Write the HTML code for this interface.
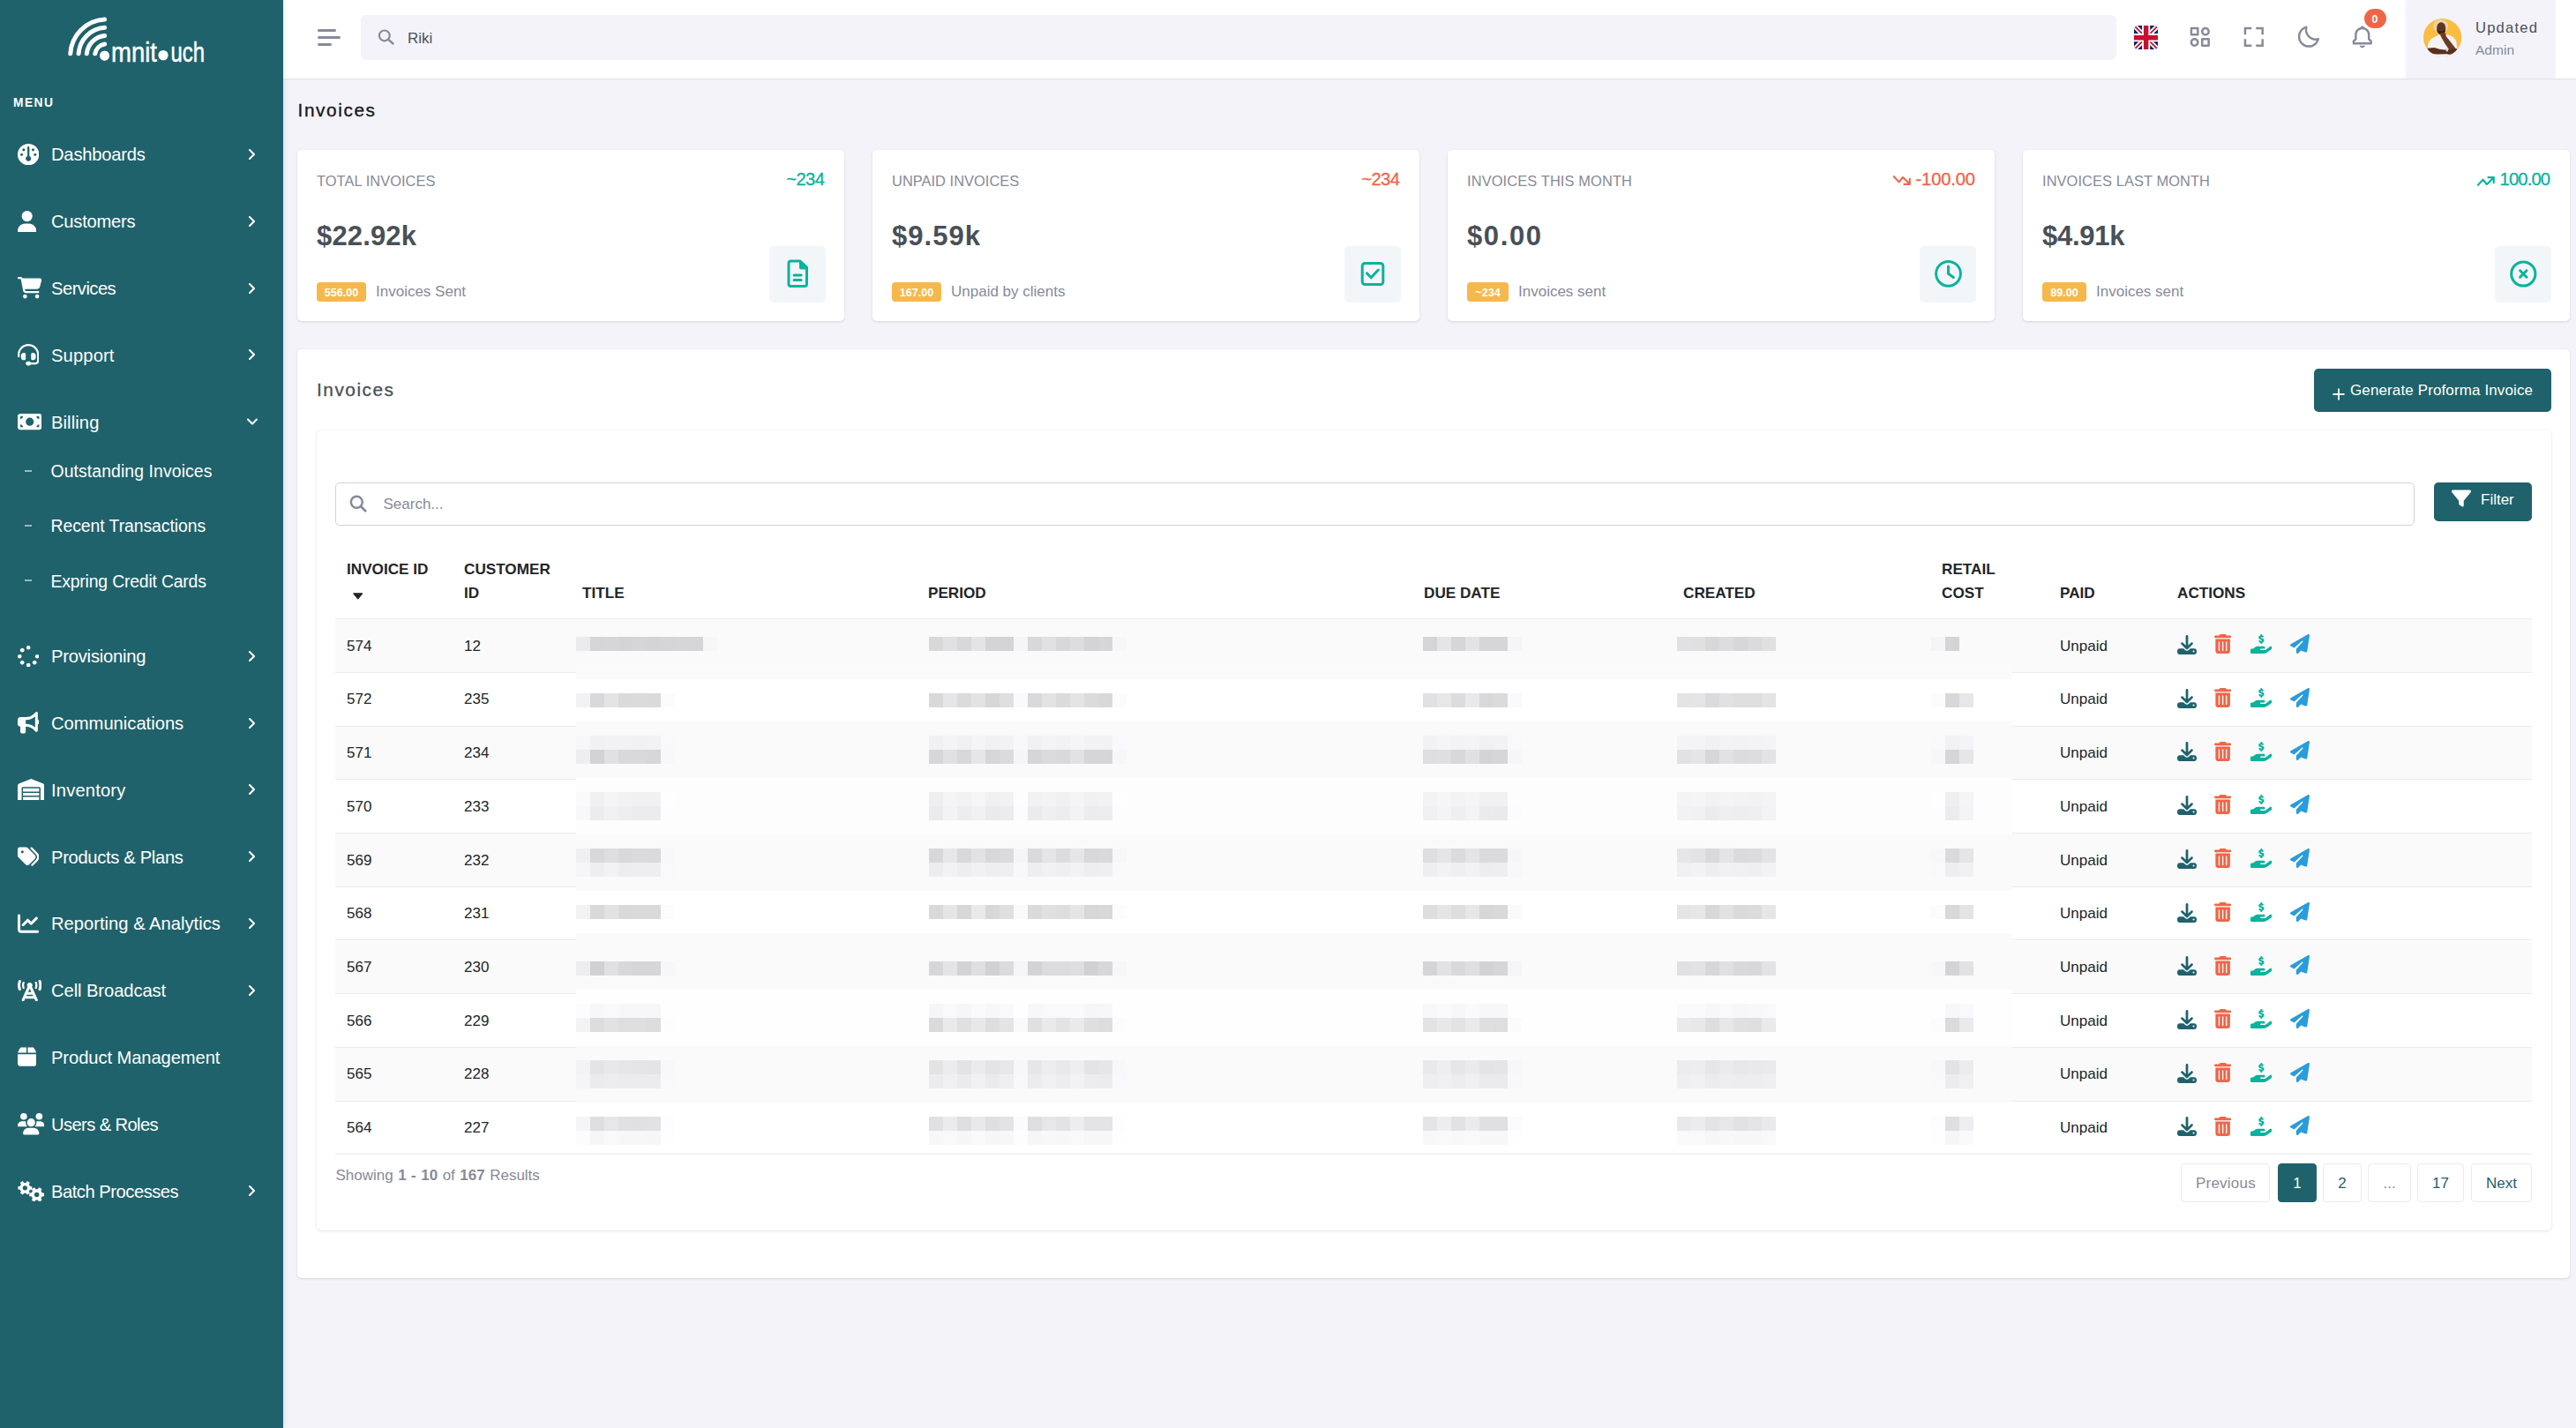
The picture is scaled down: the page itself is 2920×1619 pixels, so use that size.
<!DOCTYPE html><html lang="en"><head><meta charset="utf-8"><title>Invoices</title><style>
*{box-sizing:border-box;margin:0;padding:0}
html,body{width:2920px;height:1619px;overflow:hidden}
body{background:#f3f3f9;font-family:"Liberation Sans",sans-serif;color:#212529;position:relative}
.abs{position:absolute}
#side{position:absolute;left:0;top:0;width:321px;height:1619px;background:#1f626b;z-index:5;box-shadow:1px 0 5px rgba(15,34,58,.10)}
#top{position:absolute;left:321px;top:0;width:2599px;height:90px;background:#fff;border-bottom:1px solid #e3e4ea;box-shadow:0 1px 1px rgba(56,65,74,.025)}
.t{position:absolute;white-space:nowrap;line-height:1}
.card{position:absolute;background:#fff;border-radius:5px;box-shadow:0 1px 3px rgba(56,65,74,.16)}
.bdg{position:absolute;background:#f7b84b;color:#fff;font-weight:700;font-size:12.6px;border-radius:4px;height:22px;line-height:24px;text-align:center}
.ibox{position:absolute;width:64px;height:64px;border-radius:5px;background:#f3f6f9}
.btn{position:absolute;background:#1f626b;border-radius:5px;color:#fff}
.row{position:absolute;left:380px;width:2490px;border-bottom:1px solid #e9ebec}
.pg{position:absolute;top:1319px;height:44px;border:1px solid #e9ebec;border-radius:4px;background:#fff}
</style></head><body>
<div id="side">
<svg class="abs" style="left:60px;top:10px" width="190" height="75" viewBox="60 10 190 75">
<g fill="none" stroke="#fff" stroke-width="5" stroke-linecap="round">
<path d="M79.76 60.80A41.2 41.2 0 0 1 118.60 21.96"/>
<path d="M89.08 60.80A31.9 31.9 0 0 1 118.60 31.28"/>
<path d="M98.32 60.80A22.7 22.7 0 0 1 118.60 40.52"/>
<path d="M107.80 60.81A13.3 13.3 0 0 1 118.61 50.00"/>
</g>
<text y="69.500" font-family="Liberation Sans, sans-serif" font-size="31" fill="#fff" stroke="#fff" stroke-width="0.5"><tspan x="113.500" font-size="18" y="68">o</tspan><tspan x="126" y="70" textLength="52" lengthAdjust="spacingAndGlyphs">mnit</tspan><tspan x="180" y="67.500" font-size="18">o</tspan><tspan x="193.500" y="70" textLength="38.500" lengthAdjust="spacingAndGlyphs">uch</tspan></text>
<circle cx="118.500" cy="63.200" r="5.500" fill="#fff"/>
<circle cx="185" cy="62.500" r="5.600" fill="#fff"/>
</svg>
<div class="t " style="top:109.52px;font-size:13.8px;left:15px;color:#fff;font-weight:700;letter-spacing:1.456px;">MENU</div>
<svg width="24.40" height="24.40" viewBox="0 0 512 512" style="position:absolute;left:19.600px;top:162.7px"><path fill="#fff" fill-rule="evenodd" d="M0 256a256 256 0 1 1 512 0A256 256 0 1 1 0 256zm320 96c0-26.9-16.5-49.9-40-59.300V88c0-13.300-10.700-24-24-24s-24 10.700-24 24V292.700c-23.500 9.500-40 32.500-40 59.300c0 35.300 28.700 64 64 64s64-28.700 64-64zM144 176a32 32 0 1 0 0-64 32 32 0 1 0 0 64zm-16 80a32 32 0 1 0 -64 0 32 32 0 1 0 64 0zm288 32a32 32 0 1 0 0-64 32 32 0 1 0 0 64zM400 144a32 32 0 1 0 -64 0 32 32 0 1 0 64 0z"/></svg>
<div class="t " style="top:165.30px;font-size:20.2px;left:58px;color:#fff;letter-spacing:-0.214px;">Dashboards</div>
<svg class="abs" style="left:279px;top:166.9px" width="14" height="16" viewBox="0 0 14 16"><path d="M4 3l5 5-5 5" fill="none" stroke="#fff" stroke-width="2.100" stroke-linecap="round" stroke-linejoin="round"/></svg>
<svg width="21.35" height="24.40" viewBox="0 0 448 512" style="position:absolute;left:19.600px;top:238.5px"><path fill="#fff" fill-rule="evenodd" d="M224 256A128 128 0 1 0 224 0a128 128 0 1 0 0 256zm-45.700 48C79.800 304 0 383.800 0 482.300C0 498.700 13.300 512 29.700 512H418.300c16.400 0 29.700-13.300 29.700-29.700C448 383.800 368.200 304 269.700 304H178.300z"/></svg>
<div class="t " style="top:241.12px;font-size:20.2px;left:58px;color:#fff;letter-spacing:-0.239px;">Customers</div>
<svg class="abs" style="left:279px;top:242.7px" width="14" height="16" viewBox="0 0 14 16"><path d="M4 3l5 5-5 5" fill="none" stroke="#fff" stroke-width="2.100" stroke-linecap="round" stroke-linejoin="round"/></svg>
<svg width="27.45" height="24.40" viewBox="0 0 576 512" style="position:absolute;left:19.600px;top:314.3px"><path fill="#fff" fill-rule="evenodd" d="M0 24C0 10.700 10.700 0 24 0H69.500c22 0 41.500 12.800 50.600 32h411c26.300 0 45.500 25 38.600 50.400l-41 152.300c-8.500 31.400-37 53.300-69.500 53.300H170.700l5.400 28.500c2.200 11.300 12.100 19.500 23.600 19.500H488c13.300 0 24 10.700 24 24s-10.700 24-24 24H199.700c-34.600 0-64.300-24.600-70.700-58.500L77.400 54.500c-.700-3.800-4-6.500-7.900-6.500H24C10.700 48 0 37.300 0 24zM128 464a48 48 0 1 1 96 0 48 48 0 1 1 -96 0zm336-48a48 48 0 1 1 0 96 48 48 0 1 1 0-96z"/></svg>
<div class="t " style="top:316.94px;font-size:20.2px;left:58px;color:#fff;letter-spacing:-0.530px;">Services</div>
<svg class="abs" style="left:279px;top:318.5px" width="14" height="16" viewBox="0 0 14 16"><path d="M4 3l5 5-5 5" fill="none" stroke="#fff" stroke-width="2.100" stroke-linecap="round" stroke-linejoin="round"/></svg>
<svg width="24.40" height="24.40" viewBox="0 0 512 512" style="position:absolute;left:19.600px;top:390.2px"><path fill="#fff" fill-rule="evenodd" d="M256 48C141.100 48 48 141.100 48 256v40c0 13.300-10.700 24-24 24s-24-10.700-24-24V256C0 114.600 114.600 0 256 0S512 114.600 512 256V400.100c0 48.600-39.400 88-88.100 88L313.600 488c-8.300 14.300-23.800 24-41.600 24H240c-26.500 0-48-21.500-48-48s21.500-48 48-48h32c17.800 0 33.300 9.700 41.600 24l110.400 .100c22.100 0 40-17.900 40-40V256c0-114.900-93.100-208-208-208zM144 208h16c17.700 0 32 14.300 32 32V352c0 17.700-14.300 32-32 32H144c-35.300 0-64-28.700-64-64V272c0-35.300 28.700-64 64-64zm224 0c35.300 0 64 28.700 64 64v48c0 35.300-28.700 64-64 64H352c-17.700 0-32-14.300-32-32V240c0-17.700 14.300-32 32-32h16z"/></svg>
<div class="t " style="top:392.76px;font-size:20.2px;left:58px;color:#fff;letter-spacing:0.125px;">Support</div>
<svg class="abs" style="left:279px;top:394.4px" width="14" height="16" viewBox="0 0 14 16"><path d="M4 3l5 5-5 5" fill="none" stroke="#fff" stroke-width="2.100" stroke-linecap="round" stroke-linejoin="round"/></svg>
<svg width="27.45" height="24.40" viewBox="0 0 576 512" style="position:absolute;left:19.600px;top:466.0px"><path fill="#fff" fill-rule="evenodd" d="M64 64C28.700 64 0 92.700 0 128V384c0 35.300 28.700 64 64 64H512c35.300 0 64-28.700 64-64V128c0-35.300-28.700-64-64-64H64zm64 320H64V320c35.300 0 64 28.700 64 64zM64 192V128h64c0 35.300-28.700 64-64 64zM448 384c0-35.300 28.700-64 64-64v64H448zm64-192c-35.300 0-64-28.700-64-64h64v64zM288 160a96 96 0 1 1 0 192 96 96 0 1 1 0-192z"/></svg>
<div class="t " style="top:468.58px;font-size:20.2px;left:58px;color:#fff;letter-spacing:0.084px;">Billing</div>
<svg class="abs" style="left:277px;top:471.2px" width="18" height="14" viewBox="0 0 18 14"><path d="M4 4.500l5 5 5-5" fill="none" stroke="#fff" stroke-width="2.100" stroke-linecap="round" stroke-linejoin="round"/></svg>
<div class="abs" style="left:28px;top:532.5px;width:8px;height:2px;background:rgba(255,255,255,.55)"></div>
<div class="t " style="top:525.38px;font-size:19.4px;left:57.5px;color:#fff;letter-spacing:0.096px;">Outstanding Invoices</div>
<div class="abs" style="left:28px;top:594.5px;width:8px;height:2px;background:rgba(255,255,255,.55)"></div>
<div class="t " style="top:587.38px;font-size:19.4px;left:57.5px;color:#fff;letter-spacing:-0.058px;">Recent Transactions</div>
<div class="abs" style="left:28px;top:657.3px;width:8px;height:2px;background:rgba(255,255,255,.55)"></div>
<div class="t " style="top:650.18px;font-size:19.4px;left:57.5px;color:#fff;letter-spacing:-0.187px;">Expring Credit Cards</div>
<svg width="24.40" height="24.40" viewBox="0 0 512 512" style="position:absolute;left:19.600px;top:731.5px"><path fill="#fff" fill-rule="evenodd" d="M304 48a48 48 0 1 0 -96 0 48 48 0 1 0 96 0zm0 416a48 48 0 1 0 -96 0 48 48 0 1 0 96 0zM48 304a48 48 0 1 0 0-96 48 48 0 1 0 0 96zm464-48a48 48 0 1 0 -96 0 48 48 0 1 0 96 0zM142.900 437A48 48 0 1 0 75 369.100 48 48 0 1 0 142.900 437zm0-294.200A48 48 0 1 0 75 75a48 48 0 1 0 67.900 67.900zM369.100 437A48 48 0 1 0 437 369.100 48 48 0 1 0 369.100 437z"/></svg>
<div class="t " style="top:734.10px;font-size:20.2px;left:58px;color:#fff;letter-spacing:-0.222px;">Provisioning</div>
<svg class="abs" style="left:279px;top:735.7px" width="14" height="16" viewBox="0 0 14 16"><path d="M4 3l5 5-5 5" fill="none" stroke="#fff" stroke-width="2.100" stroke-linecap="round" stroke-linejoin="round"/></svg>
<svg width="24.40" height="24.40" viewBox="0 0 512 512" style="position:absolute;left:19.600px;top:807.3px"><path fill="#fff" fill-rule="evenodd" d="M480 32c0-12.900-7.800-24.600-19.800-29.600s-25.700-2.200-34.900 6.900L381.700 53c-48 48-113.100 75-181 75H192 160 64c-35.300 0-64 28.700-64 64v96c0 35.300 28.700 64 64 64l0 128c0 17.700 14.300 32 32 32h64c17.700 0 32-14.300 32-32V352l8.700 0c67.900 0 133 27 181 75l43.600 43.600c9.200 9.200 22.900 11.900 34.900 6.900s19.800-16.600 19.800-29.600V300.400c18.600-8.800 32-32.500 32-60.400s-13.400-51.600-32-60.400V32zm-64 76.700V240 371.300C357.200 317.800 280.500 288 200.700 288H192V192h8.700c79.800 0 156.500-29.800 215.300-83.300z"/></svg>
<div class="t " style="top:809.92px;font-size:20.2px;left:58px;color:#fff;letter-spacing:-0.011px;">Communications</div>
<svg class="abs" style="left:279px;top:811.5px" width="14" height="16" viewBox="0 0 14 16"><path d="M4 3l5 5-5 5" fill="none" stroke="#fff" stroke-width="2.100" stroke-linecap="round" stroke-linejoin="round"/></svg>
<svg width="30.50" height="24.40" viewBox="0 0 640 512" style="position:absolute;left:19.600px;top:883.1px"><path fill="#fff" fill-rule="evenodd" d="M0 488V171.300c0-26.200 15.900-49.700 40.200-59.400L308.100 4.800c7.600-3.100 16.100-3.100 23.800 0L599.800 111.900c24.300 9.700 40.200 33.300 40.200 59.400V488c0 13.300-10.700 24-24 24H568c-13.300 0-24-10.700-24-24V224c0-17.700-14.300-32-32-32H128c-17.700 0-32 14.300-32 32V488c0 13.300-10.700 24-24 24H24c-13.300 0-24-10.700-24-24zm488 24l-336 0c-13.300 0-24-10.700-24-24V432H512l0 56c0 13.300-10.700 24-24 24zM128 400V336H512v64H128zm0-96V224H512l0 80H128z"/></svg>
<div class="t " style="top:885.74px;font-size:20.2px;left:58px;color:#fff;letter-spacing:0.164px;">Inventory</div>
<svg class="abs" style="left:279px;top:887.3px" width="14" height="16" viewBox="0 0 14 16"><path d="M4 3l5 5-5 5" fill="none" stroke="#fff" stroke-width="2.100" stroke-linecap="round" stroke-linejoin="round"/></svg>
<svg width="24.40" height="24.40" viewBox="0 0 512 512" style="position:absolute;left:19.600px;top:959.0px"><path fill="#fff" fill-rule="evenodd" d="M345 39.100L472.800 168.400c52.400 53 52.400 138.200 0 191.200L360.800 472.900c-9.300 9.400-24.500 9.500-33.900 .200s-9.500-24.500-.200-33.900L438.600 325.900c33.900-34.300 33.900-89.400 0-123.700L310.900 72.900c-9.300-9.400-9.200-24.600 .200-33.900s24.600-9.200 33.900 .200zM0 229.500V80C0 53.500 21.500 32 48 32H197.500c17 0 33.300 6.700 45.300 18.700l168 168c25 25 25 65.500 0 90.500L277.300 442.700c-25 25-65.500 25-90.500 0l-168-168C6.700 262.700 0 246.500 0 229.500zM144 144a32 32 0 1 0 -64 0 32 32 0 1 0 64 0z"/></svg>
<div class="t " style="top:961.56px;font-size:20.2px;left:58px;color:#fff;letter-spacing:-0.330px;">Products &amp; Plans</div>
<svg class="abs" style="left:279px;top:963.2px" width="14" height="16" viewBox="0 0 14 16"><path d="M4 3l5 5-5 5" fill="none" stroke="#fff" stroke-width="2.100" stroke-linecap="round" stroke-linejoin="round"/></svg>
<svg width="24.40" height="24.40" viewBox="0 0 512 512" style="position:absolute;left:19.600px;top:1034.8px"><path fill="#fff" fill-rule="evenodd" d="M64 64c0-17.700-14.300-32-32-32S0 46.300 0 64V400c0 44.200 35.800 80 80 80H480c17.700 0 32-14.300 32-32s-14.300-32-32-32H80c-8.800 0-16-7.200-16-16V64zm406.600 86.600c12.500-12.500 12.500-32.800 0-45.300s-32.800-12.500-45.300 0L320 210.700l-57.400-57.400c-12.500-12.500-32.800-12.500-45.300 0l-112 112c-12.500 12.500-12.500 32.800 0 45.300s32.800 12.500 45.300 0L240 221.300l57.400 57.400c12.500 12.500 32.800 12.500 45.300 0l128-128z"/></svg>
<div class="t " style="top:1037.38px;font-size:20.2px;left:58px;color:#fff;letter-spacing:-0.000px;">Reporting &amp; Analytics</div>
<svg class="abs" style="left:279px;top:1039.0px" width="14" height="16" viewBox="0 0 14 16"><path d="M4 3l5 5-5 5" fill="none" stroke="#fff" stroke-width="2.100" stroke-linecap="round" stroke-linejoin="round"/></svg>
<svg width="27.45" height="24.40" viewBox="0 0 576 512" style="position:absolute;left:19.600px;top:1110.6px"><path fill="#fff" fill-rule="evenodd" d="M62.600 2.300C46.200-4.300 27.600 3.600 20.900 20C7.400 53.400 0 89.900 0 128s7.400 74.600 20.900 108c6.600 16.400 25.300 24.300 41.700 17.700S86.900 228.400 80.300 212C69.800 186.100 64 157.800 64 128s5.800-58.100 16.300-84C86.900 27.600 79 9 62.600 2.300zm450.800 0C497 9 489.100 27.600 495.700 44C506.200 69.900 512 98.200 512 128s-5.800 58.100-16.300 84c-6.600 16.400 1.300 35 17.700 41.700s35-1.300 41.700-17.700c13.500-33.400 20.900-69.900 20.900-108s-7.400-74.600-20.900-108C548.400 3.600 529.800-4.300 513.400 2.300zM340.100 165.200c7.500-10.500 11.900-23.300 11.900-37.200c0-35.300-28.700-64-64-64s-64 28.700-64 64c0 13.900 4.400 26.700 11.900 37.200L98.900 466.800c-7.300 16.100-.2 35.100 15.900 42.400s35.100 .2 42.400-15.900L177.700 448H398.300l20.600 45.200c7.300 16.100 26.300 23.200 42.400 15.900s23.200-26.300 15.900-42.400L340.100 165.200zM369.200 384H206.800l14.500-32H354.700l14.500 32zM288 205.300L325.600 288H250.400L288 205.300zM163.300 73.600c5.300-12.100-.2-26.300-12.400-31.600s-26.300 .2-31.600 12.400C109.500 77 104 101.900 104 128s5.500 51 15.300 73.600c5.300 12.100 19.500 17.700 31.600 12.400s17.700-19.500 12.400-31.600C156 165.800 152 147.400 152 128s4-37.800 11.300-54.400zM456.700 54.400c-5.300-12.100-19.500-17.700-31.600-12.400s-17.700 19.500-12.400 31.600C420 90.200 424 108.600 424 128s-4 37.800-11.300 54.400c-5.300 12.100 .2 26.300 12.400 31.600s26.300-.2 31.600-12.400C466.500 179 472 154.100 472 128s-5.500-51-15.300-73.600z"/></svg>
<div class="t " style="top:1113.20px;font-size:20.2px;left:58px;color:#fff;letter-spacing:-0.082px;">Cell Broadcast</div>
<svg class="abs" style="left:279px;top:1114.8px" width="14" height="16" viewBox="0 0 14 16"><path d="M4 3l5 5-5 5" fill="none" stroke="#fff" stroke-width="2.100" stroke-linecap="round" stroke-linejoin="round"/></svg>
<svg width="21.35" height="24.40" viewBox="0 0 448 512" style="position:absolute;left:19.600px;top:1186.4px"><path fill="#fff" fill-rule="evenodd" d="M50.700 58.500L0 160H208V32H93.700C75.500 32 58.900 42.300 50.700 58.500zM240 160H448L397.300 58.500C389.100 42.300 372.500 32 354.300 32H240V160zm208 32H0V416c0 35.300 28.700 64 64 64H384c35.300 0 64-28.700 64-64V192z"/></svg>
<div class="t " style="top:1189.02px;font-size:20.2px;left:58px;color:#fff;letter-spacing:-0.096px;">Product Management</div>
<svg width="30.50" height="24.40" viewBox="0 0 640 512" style="position:absolute;left:19.600px;top:1262.2px"><path fill="#fff" fill-rule="evenodd" d="M144 0a80 80 0 1 1 0 160A80 80 0 1 1 144 0zM512 0a80 80 0 1 1 0 160A80 80 0 1 1 512 0zM0 298.700C0 239.800 47.800 192 106.700 192h42.700c15.900 0 31 3.500 44.600 9.700c-1.300 7.200-1.900 14.700-1.900 22.300c0 38.200 16.800 72.500 43.300 96c-.200 0-.400 0-.700 0H21.300C9.600 320 0 310.400 0 298.700zM405.300 320c-.200 0-.400 0-.700 0c26.600-23.500 43.300-57.800 43.300-96c0-7.600-.700-15-1.900-22.300c13.600-6.300 28.700-9.700 44.600-9.700h42.700C592.200 192 640 239.800 640 298.700c0 11.800-9.600 21.300-21.300 21.300H405.300zM224 224a96 96 0 1 1 192 0 96 96 0 1 1 -192 0zM128 485.300C128 411.700 187.700 352 261.300 352H378.700C452.300 352 512 411.700 512 485.300c0 14.700-11.900 26.700-26.700 26.700H154.700c-14.700 0-26.700-11.900-26.700-26.700z"/></svg>
<div class="t " style="top:1264.84px;font-size:20.2px;left:58px;color:#fff;letter-spacing:-0.608px;">Users &amp; Roles</div>
<svg width="30.50" height="24.40" viewBox="0 0 640 512" style="position:absolute;left:19.600px;top:1338.1px"><path fill="#fff" fill-rule="evenodd" d="M292.6 142.7 L341.3 149.7 L341.3 220.3 L292.6 227.3 L270.5 265.7 L288.8 311.3 L227.5 346.7 L197.1 308.0 L152.9 308.0 L122.5 346.7 L61.2 311.3 L79.5 265.7 L57.4 227.3 L8.7 220.3 L8.7 149.7 L57.4 142.7 L79.5 104.3 L61.2 58.7 L122.5 23.3 L152.9 62.0 L197.1 62.0 L227.5 23.3 L288.8 58.7 L270.5 104.3Z M230.0 185.0 A55 55 0 1 0 120.0 185.0 A55 55 0 1 0 230.0 185.0Z M579.2 300.3 L631.1 307.6 L631.1 382.4 L579.2 389.7 L555.8 430.2 L575.4 478.8 L510.6 516.2 L478.4 474.9 L431.6 474.9 L399.4 516.2 L334.6 478.8 L354.2 430.2 L330.8 389.7 L278.9 382.4 L278.9 307.6 L330.8 300.3 L354.2 259.8 L334.6 211.2 L399.4 173.8 L431.6 215.1 L478.4 215.1 L510.6 173.8 L575.4 211.2 L555.8 259.8Z M513.0 345.0 A58 58 0 1 0 397.0 345.0 A58 58 0 1 0 513.0 345.0Z"/></svg>
<div class="t " style="top:1340.66px;font-size:20.2px;left:58px;color:#fff;letter-spacing:-0.484px;">Batch Processes</div>
<svg class="abs" style="left:279px;top:1342.3px" width="14" height="16" viewBox="0 0 14 16"><path d="M4 3l5 5-5 5" fill="none" stroke="#fff" stroke-width="2.100" stroke-linecap="round" stroke-linejoin="round"/></svg>
</div>
<div id="top"></div>
<div class="abs" style="left:360px;top:33.00px;width:21px;height:3px;border-radius:1.500px;background:#878a99"></div>
<div class="abs" style="left:360px;top:41.10px;width:26px;height:3px;border-radius:1.500px;background:#878a99"></div>
<div class="abs" style="left:360px;top:49.00px;width:16px;height:3px;border-radius:1.500px;background:#878a99"></div>
<div class="abs" style="left:409px;top:17px;width:1989.500px;height:50.500px;border-radius:6px;background:#f3f3f9"></div>
<svg class="abs" style="left:428px;top:32px" width="20" height="20" viewBox="0 0 20 20"><circle cx="7.800" cy="8.400" r="5.900" fill="none" stroke="#878a99" stroke-width="2.200"/><path d="M12.300 12.900L17.500 17.500" stroke="#878a99" stroke-width="2.500" stroke-linecap="round"/></svg>
<div class="t " style="top:34.51px;font-size:17px;left:462px;color:#495057;">Riki</div>
<svg class="abs" style="left:2419px;top:29px" width="27.300" height="27.300" viewBox="0 0 60 60"><defs><clipPath id="fc"><rect width="60" height="60" rx="11"/></clipPath></defs>
<g clip-path="url(#fc)"><rect width="60" height="60" fill="#012169"/>
<path d="M0 0L60 60M60 0L0 60" stroke="#fff" stroke-width="12"/>
<path d="M0 0L60 60M60 0L0 60" stroke="#C8102E" stroke-width="4"/>
<path d="M30 0V60M0 30H60" stroke="#fff" stroke-width="20"/>
<path d="M30 0V60M0 30H60" stroke="#C8102E" stroke-width="12"/></g></svg>
<svg class="abs" style="left:2479px;top:26.9px" width="29.6" height="29.6" viewBox="0 0 24 24"><path fill="#878a99" d="M10 3H4a1 1 0 0 0-1 1v6a1 1 0 0 0 1 1h6a1 1 0 0 0 1-1V4a1 1 0 0 0-1-1zM9 9H5V5h4v4zm11 4h-6a1 1 0 0 0-1 1v6a1 1 0 0 0 1 1h6a1 1 0 0 0 1-1v-6a1 1 0 0 0-1-1zm-1 6h-4v-4h4v4zM17 3c-2.206 0-4 1.794-4 4s1.794 4 4 4 4-1.794 4-4-1.794-4-4-4zm0 6c-1.103 0-2-.897-2-2s.897-2 2-2 2 .897 2 2-.897 2-2 2zM7 13c-2.206 0-4 1.794-4 4s1.794 4 4 4 4-1.794 4-4-1.794-4-4-4zm0 6c-1.103 0-2-.897-2-2s.897-2 2-2 2 .897 2 2-.897 2-2 2z"/></svg>
<svg class="abs" style="left:2540px;top:26.9px" width="29.6" height="29.6" viewBox="0 0 24 24"><path fill="#878a99" d="M5 5h5V3H3v7h2zm5 14H5v-5H3v7h7zm11-5h-2v5h-5v2h7zm-2-4h2V3h-7v2h5z"/></svg>
<svg class="abs" style="left:2601.5px;top:27px" width="29.6" height="29.6" viewBox="0 0 24 24"><path fill="#878a99" d="M20.742 13.045a8.088 8.088 0 0 1-2.077.271c-2.135 0-4.140-.830-5.646-2.336a8.025 8.025 0 0 1-2.064-7.723A1 1 0 0 0 9.730 2.034a10.014 10.014 0 0 0-4.489 2.582c-3.898 3.898-3.898 10.243 0 14.143a9.937 9.937 0 0 0 7.072 2.930 9.930 9.930 0 0 0 7.070-2.929 10.007 10.007 0 0 0 2.583-4.491 1.001 1.001 0 0 0-1.224-1.224zm-2.772 4.301a7.947 7.947 0 0 1-5.656 2.343 7.953 7.953 0 0 1-5.658-2.344c-3.118-3.119-3.118-8.195 0-11.314a7.923 7.923 0 0 1 2.060-1.483 10.027 10.027 0 0 0 2.890 7.848 9.972 9.972 0 0 0 7.848 2.891 8.036 8.036 0 0 1-1.484 2.059z"/></svg>
<svg class="abs" style="left:2663px;top:27.1px" width="29.6" height="29.6" viewBox="0 0 24 24"><path fill="#878a99" d="M19 13.586V10c0-3.217-2.185-5.927-5.145-6.742C13.562 2.520 12.846 2 12 2s-1.562.520-1.855 1.258C7.185 4.074 5 6.783 5 10v3.586l-1.707 1.707A.996.996 0 0 0 3 16v2a1 1 0 0 0 1 1h16a1 1 0 0 0 1-1v-2a.996.996 0 0 0-.293-.707L19 13.586zM19 17H5v-.586l1.707-1.707A.996.996 0 0 0 7 14v-4c0-2.757 2.243-5 5-5s5 2.243 5 5v4c0 .266.105.520.293.707L19 16.414V17zm-7 5a2.980 2.980 0 0 0 2.818-2H9.182A2.980 2.980 0 0 0 12 22z"/></svg>
<div class="abs" style="left:2679.500px;top:10px;width:25px;height:22px;border-radius:11px;background:#f06548;color:#fff;font-size:12.500px;font-weight:700;text-align:center;line-height:24.600px">0</div>
<div class="abs" style="left:2727px;top:0;width:170px;height:89px;background:#f3f3f9"></div>
<svg class="abs" style="left:2746.800px;top:20.800px" width="43.200" height="43.200" viewBox="0 0 43.200 43.200"><defs><clipPath id="av"><circle cx="21.600" cy="21.600" r="21.600"/></clipPath></defs>
<g clip-path="url(#av)"><rect width="44" height="44" fill="#f9bd42"/>
<ellipse cx="19.700" cy="8.800" rx="8.400" ry="7.700" fill="#ecd3a6"/>
<path d="M4 44 L5 31 Q6 23.500 12.500 21 L17.500 18.600 L26.500 18.300 Q35 20 37.300 26 L39.500 44Z" fill="#f4f2f3"/>
<ellipse cx="20.200" cy="11" rx="5.100" ry="6.800" fill="#5e3623"/>
<path d="M15.300 12.500 Q16 17.800 20.200 18.300 Q24.300 17.800 25.100 12.500 Q22.500 15.300 20.200 14.600 Q17.800 15.300 15.300 12.500Z" fill="#2c1a13"/>
<path d="M18.600 16.800 Q21.500 14.800 25 16.500 L26 20.500 L37.500 35 L32 39.500 L24.500 28.500 L20 20.800Z" fill="#6d3b24"/>
<path d="M4.500 33.800 L12.500 33 Q22 37.200 33 34.200 L38.500 34.200 L36 40 Q30 41.500 27 40.200 L16 40.500 Q9 40.500 5 37.500Z" fill="#5a301c"/>
<rect x="25.700" y="33.800" width="2.300" height="3.600" rx=".8" fill="#dcd9d6"/>
</g></svg>
<div class="t " style="top:23.55px;font-size:16.6px;left:2806px;color:#495057;letter-spacing:1.206px;">Updated</div>
<div class="t " style="top:48.98px;font-size:15.5px;left:2806px;color:#878a99;letter-spacing:0.016px;">Admin</div>
<div class="t " style="top:115.49px;font-size:20.8px;left:337.5px;color:#17191c;letter-spacing:1.599px;-webkit-text-stroke:.35px #17191c;">Invoices</div>
<div class="card" style="left:337px;top:170px;width:620px;height:194px">
<div class="t " style="top:27.32px;font-size:16.4px;left:22px;color:#878a99;letter-spacing:0.065px;">TOTAL INVOICES</div>
<div class="t " style="top:22.80px;font-size:20.2px;right:22px;color:#0ab39c;"><span style="letter-spacing:-0.534px;margin-right:0.534px;-webkit-text-stroke:.3px #0ab39c">~234</span></div>
<div class="t " style="top:81.76px;font-size:31px;left:22px;color:#495057;font-weight:700;letter-spacing:0.157px;">$22.92k</div>
<div class="bdg" style="left:22px;top:150px;width:56px">556.00</div>
<div class="t " style="top:151.81px;font-size:17px;left:89px;color:#878a99;">Invoices Sent</div>
<div class="ibox" style="left:535px;top:109px"><svg width="64" height="64" viewBox="0 0 64 64"><g fill="none" stroke="#0ab39c" stroke-width="3" stroke-linejoin="round" stroke-linecap="round"><path d="M24.500 17.100H35L42.500 24.200V43a2.500 2.500 0 0 1-2.500 2.500H24.500A2.500 2.500 0 0 1 22 43V19.600a2.500 2.500 0 0 1 2.500-2.500z"/><path d="M28.100 33.100H36.100M28.100 38.600H36.100"/></g><path d="M34 16.500h1.600l8 7.500v2.500h-7.100a2.500 2.500 0 0 1-2.500-2.500z" fill="#0ab39c"/></svg></div>
</div>
<div class="card" style="left:989px;top:170px;width:620px;height:194px">
<div class="t " style="top:27.32px;font-size:16.4px;left:22px;color:#878a99;letter-spacing:0.044px;">UNPAID INVOICES</div>
<div class="t " style="top:22.80px;font-size:20.2px;right:22px;color:#f06548;"><span style="letter-spacing:-0.534px;margin-right:0.534px;-webkit-text-stroke:.3px #f06548">~234</span></div>
<div class="t " style="top:81.76px;font-size:31px;left:22px;color:#495057;font-weight:700;letter-spacing:1.036px;">$9.59k</div>
<div class="bdg" style="left:22px;top:150px;width:56px">167.00</div>
<div class="t " style="top:151.81px;font-size:17px;left:89px;color:#878a99;">Unpaid by clients</div>
<div class="ibox" style="left:535px;top:109px"><svg width="64" height="64" viewBox="0 0 64 64"><g fill="none" stroke="#0ab39c" stroke-width="3" stroke-linejoin="round" stroke-linecap="round"><rect x="20.200" y="19.400" width="23.600" height="24.100" rx="3"/><path d="M25.500 30.900l4.700 4.900 8.100-8.700"/></g></svg></div>
</div>
<div class="card" style="left:1641px;top:170px;width:620px;height:194px">
<div class="t " style="top:27.32px;font-size:16.4px;left:22px;color:#878a99;letter-spacing:0.129px;">INVOICES THIS MONTH</div>
<div class="t " style="top:22.80px;font-size:20.2px;right:22px;color:#f06548;"><svg width="20" height="12" viewBox="0 0 20 12" style="vertical-align:-1px;margin-right:6px;overflow:visible"><path d="M0.900 1.200L6.600 7.400L11 2L18.600 9.600M18.800 3.800V9.900H12.400" fill="none" stroke="#f06548" stroke-width="2.100" stroke-linejoin="round" stroke-linecap="round"/></svg><span style="letter-spacing:-0.169px;margin-right:0.169px;-webkit-text-stroke:.3px #f06548">-100.00</span></div>
<div class="t " style="top:81.76px;font-size:31px;left:22px;color:#495057;font-weight:700;letter-spacing:1.606px;">$0.00</div>
<div class="bdg" style="left:22px;top:150px;width:47px">~234</div>
<div class="t " style="top:151.81px;font-size:17px;left:80px;color:#878a99;">Invoices sent</div>
<div class="ibox" style="left:535px;top:109px"><svg width="64" height="64" viewBox="0 0 64 64"><g fill="none" stroke="#0ab39c" stroke-width="3" stroke-linejoin="round" stroke-linecap="round"><circle cx="32.500" cy="31.300" r="13.900"/><path d="M32.500 22.900v8.400l5.800 4.200"/></g></svg></div>
</div>
<div class="card" style="left:2293px;top:170px;width:620px;height:194px">
<div class="t " style="top:27.32px;font-size:16.4px;left:22px;color:#878a99;letter-spacing:0.093px;">INVOICES LAST MONTH</div>
<div class="t " style="top:22.80px;font-size:20.2px;right:22px;color:#0ab39c;"><svg width="20" height="12" viewBox="0 0 20 12" style="vertical-align:-1px;margin-right:6px;overflow:visible"><path d="M0.900 10.800L6.600 4.600L11 10L18.600 2.400M12.400 2.100H18.800V8.200" fill="none" stroke="#0ab39c" stroke-width="2.100" stroke-linejoin="round" stroke-linecap="round"/></svg><span style="letter-spacing:-0.857px;margin-right:0.857px;-webkit-text-stroke:.3px #0ab39c">100.00</span></div>
<div class="t " style="top:81.76px;font-size:31px;left:22px;color:#495057;font-weight:700;letter-spacing:-0.264px;">$4.91k</div>
<div class="bdg" style="left:22px;top:150px;width:50px">89.00</div>
<div class="t " style="top:151.81px;font-size:17px;left:83px;color:#878a99;">Invoices sent</div>
<div class="ibox" style="left:535px;top:109px"><svg width="64" height="64" viewBox="0 0 64 64"><g fill="none" stroke="#0ab39c" stroke-width="3" stroke-linejoin="round" stroke-linecap="round"><circle cx="32.300" cy="31.500" r="13.600"/><path d="M28.600 27.800l7.400 7.400M36 27.800l-7.400 7.400"/></g></svg></div>
</div>
<div class="card" style="left:337px;top:396px;width:2576px;height:1053px"></div>
<div class="t " style="top:432.29px;font-size:20.8px;left:359px;color:#495057;letter-spacing:1.528px;-webkit-text-stroke:.3px #495057;">Invoices</div>
<div class="btn" style="left:2623px;top:418px;width:269px;height:49px"><svg class="abs" style="left:19.500px;top:21px" width="16" height="16" viewBox="0 0 16 16"><path d="M8 1.500v13M1.500 8h13" stroke="#fff" stroke-width="1.800" fill="none"/></svg><div class="t " style="top:15.61px;font-size:17px;left:41px;color:#fff;letter-spacing:0.121px;">Generate Proforma Invoice</div></div>
<div class="abs" style="left:359px;top:488px;width:2533px;height:907px;background:#fff;border-radius:5px;box-shadow:0 1px 3px rgba(56,65,74,.13), 0 0 0 1px rgba(56,65,74,.025)"></div>
<div class="abs" style="left:380px;top:547px;width:2357px;height:48.500px;border:1px solid #ced4da;border-radius:5px;background:#fff"></div>
<svg class="abs" style="left:396.300px;top:560.800px" width="20" height="20" viewBox="0 0 20 20"><circle cx="8.300" cy="8.300" r="6.500" fill="none" stroke="#878a99" stroke-width="2.500"/><path d="M13.200 13.200L18.200 18.200" stroke="#878a99" stroke-width="2.700" stroke-linecap="round"/></svg>
<div class="t " style="top:562.91px;font-size:17px;left:434.5px;color:#878a99;">Search...</div>
<div class="btn" style="left:2759px;top:547px;width:111px;height:44px"><svg width="22.00" height="22.00" viewBox="0 0 512 512" style="position:absolute;left:19.500px;top:7px"><path fill="#fff" fill-rule="evenodd" d="M3.900 54.900C10.500 40.900 24.500 32 40 32H472c15.500 0 29.500 8.900 36.100 22.900s4.600 30.500-5.200 42.500L320 320.900V448c0 12.100-6.800 23.200-17.700 28.600s-23.800 4.300-33.500-3l-64-48c-8.100-6-12.800-15.500-12.800-25.600V320.900L9 97.300C-.7 85.400-2.800 68.800 3.900 54.900z"/></svg><div class="t " style="top:11.11px;font-size:17px;left:53px;color:#fff;">Filter</div></div>
<div class="t " style="top:637.48px;font-size:17.15px;left:393px;color:#212529;font-weight:700;">INVOICE ID</div>
<svg class="abs" style="left:399.500px;top:672px" width="11.500" height="8" viewBox="0 0 11.500 8"><path d="M0.500 0.800h10.500L5.750 7.200z" fill="#212529" stroke="#212529" stroke-width="1" stroke-linejoin="round"/></svg>
<div class="t " style="top:637.48px;font-size:17.15px;left:526px;color:#212529;font-weight:700;">CUSTOMER</div>
<div class="t " style="top:663.68px;font-size:17.15px;left:526px;color:#212529;font-weight:700;">ID</div>
<div class="t " style="top:663.68px;font-size:17.15px;left:660px;color:#212529;font-weight:700;">TITLE</div>
<div class="t " style="top:663.68px;font-size:17.15px;left:1052px;color:#212529;font-weight:700;">PERIOD</div>
<div class="t " style="top:663.68px;font-size:17.15px;left:1614px;color:#212529;font-weight:700;">DUE DATE</div>
<div class="t " style="top:663.68px;font-size:17.15px;left:1908px;color:#212529;font-weight:700;">CREATED</div>
<div class="t " style="top:637.48px;font-size:17.15px;left:2201px;color:#212529;font-weight:700;">RETAIL</div>
<div class="t " style="top:663.68px;font-size:17.15px;left:2201px;color:#212529;font-weight:700;">COST</div>
<div class="t " style="top:663.68px;font-size:17.15px;left:2335px;color:#212529;font-weight:700;">PAID</div>
<div class="t " style="top:663.68px;font-size:17.15px;left:2468px;color:#212529;font-weight:700;">ACTIONS</div>
<div class="abs" style="left:380px;top:700.700px;width:2490px;height:1px;background:#e9ebec"></div>
<div class="row" style="top:702.30px;height:60.70px;background:#fafafa">
<div class="t " style="top:21.41px;font-size:17px;left:13px;color:#212529;">574</div><div class="t " style="top:21.41px;font-size:17px;left:146px;color:#212529;">12</div><div class="t " style="top:21.41px;font-size:17px;left:1955px;color:#212529;">Unpaid</div>
<svg width="22.00" height="22.00" viewBox="0 0 512 512" style="position:absolute;left:2088px;top:17.800px"><path fill="#1f626b" fill-rule="evenodd" d="M288 32c0-17.700-14.300-32-32-32s-32 14.300-32 32V274.700l-73.400-73.400c-12.500-12.500-32.800-12.500-45.300 0s-12.500 32.800 0 45.300l128 128c12.500 12.500 32.800 12.500 45.300 0l128-128c12.500-12.500 12.500-32.800 0-45.300s-32.800-12.500-45.300 0L288 274.700V32zM64 352c-35.300 0-64 28.700-64 64v32c0 35.300 28.700 64 64 64H448c35.300 0 64-28.700 64-64V416c0-35.300-28.700-64-64-64H346.500l-45.300 45.300c-25 25-65.500 25-90.500 0L165.500 352H64zm368 56a24 24 0 1 1 0 48 24 24 0 1 1 0-48z"/></svg>
<svg width="19.25" height="22.00" viewBox="0 0 448 512" style="position:absolute;left:2130px;top:17px"><path fill="#f06548" fill-rule="evenodd" d="M135.200 17.700C140.600 6.800 151.700 0 163.800 0H284.200c12.100 0 23.200 6.800 28.600 17.700L320 32h96c17.700 0 32 14.300 32 32s-14.300 32-32 32H32C14.300 96 0 81.700 0 64S14.300 32 32 32h96l7.200-14.300zM32 128H416V448c0 35.300-28.700 64-64 64H96c-35.300 0-64-28.700-64-64V128zm96 64c-8.800 0-16 7.200-16 16V432c0 8.800 7.200 16 16 16s16-7.200 16-16V208c0-8.800-7.200-16-16-16zm96 0c-8.800 0-16 7.200-16 16V432c0 8.800 7.200 16 16 16s16-7.200 16-16V208c0-8.800-7.200-16-16-16zm96 0c-8.800 0-16 7.200-16 16V432c0 8.800 7.200 16 16 16s16-7.200 16-16V208c0-8.800-7.200-16-16-16z"/></svg>
<svg width="24.75" height="22.00" viewBox="0 0 576 512" style="position:absolute;left:2170.600px;top:17px"><path fill="#0ab39c" fill-rule="evenodd" d="M312 24V34.500c6.400 1.200 12.600 2.700 18.200 4.200c12.800 3.400 20.400 16.600 17 29.400s-16.600 20.400-29.400 17c-10.900-2.900-21.100-4.900-30.200-5c-7.300-.1-14.700 1.700-19.400 4.400c-2.100 1.300-3.100 2.400-3.500 3c-.3 .5-.7 1.200-.7 2.800c0 .3 0 .5 0 .6c.2 .2 .9 1.200 3.300 2.600c5.800 3.500 14.400 6.200 27.400 10.100l.9 .3c11.100 3.300 25.900 7.800 37.900 15.300c13.700 8.600 26.100 22.900 26.400 44.900c.3 22.500-11.400 38.900-26.700 48.500c-6.700 4.100-13.900 7-21.300 8.800V232c0 13.300-10.700 24-24 24s-24-10.700-24-24V220.600c-9.500-2.300-18.200-5.300-25.600-7.800c-2.100-.7-4.100-1.400-6-2c-12.600-4.200-19.400-17.800-15.200-30.400s17.800-19.400 30.400-15.200c2.600 .9 5 1.700 7.300 2.500c13.600 4.600 23.400 7.900 33.900 8.300c8 .3 15.100-1.600 19.200-4.100c1.900-1.200 2.800-2.200 3.200-2.900c.4-.6 .9-1.800 .8-4.100l0-.2c0-1 0-2.100-4-4.600c-5.700-3.600-14.300-6.400-27.100-10.300l-1.900-.6c-10.800-3.200-25-7.500-36.400-14.400c-13.500-8.100-26.500-22-26.600-44.100c-.1-22.900 12.900-38.600 27.700-47.400c6.400-3.800 13.300-6.400 20.200-8.200V24c0-13.300 10.700-24 24-24s24 10.700 24 24zM568.200 336.300c13.100 17.800 9.300 42.800-8.500 55.900L433.100 485.500c-23.400 17.200-51.600 26.500-80.700 26.500H192 32c-17.700 0-32-14.300-32-32V416c0-17.700 14.300-32 32-32H68.800l44.900-36c22.700-18.200 50.900-28 80-28H272h16 64c17.700 0 32 14.300 32 32s-14.300 32-32 32H288 272c-8.800 0-16 7.200-16 16s7.200 16 16 16H392.600l119.700-88.200c17.800-13.100 42.800-9.300 55.900 8.500z"/></svg>
<svg width="22.00" height="22.00" viewBox="0 0 512 512" style="position:absolute;left:2216px;top:16.800px"><path fill="#299cdb" fill-rule="evenodd" d="M498.100 5.600c10.100 7 15.400 19.100 13.500 31.200l-64 416c-1.500 9.700-7.400 18.200-16 23s-18.900 5.400-28 1.600L284 427.700l-68.500 74.100c-8.900 9.700-22.900 12.900-35.200 8.100S160 493.200 160 480V396.400c0-4 1.500-7.800 4.200-10.700L331.800 202.800c5.800-6.300 5.600-16-.400-22s-15.700-6.400-22-.700L106 360.800 17.700 316.600C7.100 311.300 .3 300.700 0 288.900s5.900-22.800 16.100-28.700l448-256c10.700-6.100 23.900-5.500 34 1.400z"/></svg>
</div>
<div class="row" style="top:763.00px;height:60.70px;background:#fff">
<div class="t " style="top:21.41px;font-size:17px;left:13px;color:#212529;">572</div><div class="t " style="top:21.41px;font-size:17px;left:146px;color:#212529;">235</div><div class="t " style="top:21.41px;font-size:17px;left:1955px;color:#212529;">Unpaid</div>
<svg width="22.00" height="22.00" viewBox="0 0 512 512" style="position:absolute;left:2088px;top:17.800px"><path fill="#1f626b" fill-rule="evenodd" d="M288 32c0-17.700-14.300-32-32-32s-32 14.300-32 32V274.700l-73.400-73.400c-12.500-12.500-32.800-12.500-45.300 0s-12.500 32.800 0 45.300l128 128c12.500 12.500 32.800 12.500 45.300 0l128-128c12.500-12.500 12.500-32.800 0-45.300s-32.800-12.500-45.300 0L288 274.700V32zM64 352c-35.300 0-64 28.700-64 64v32c0 35.300 28.700 64 64 64H448c35.300 0 64-28.700 64-64V416c0-35.300-28.700-64-64-64H346.500l-45.300 45.300c-25 25-65.500 25-90.500 0L165.500 352H64zm368 56a24 24 0 1 1 0 48 24 24 0 1 1 0-48z"/></svg>
<svg width="19.25" height="22.00" viewBox="0 0 448 512" style="position:absolute;left:2130px;top:17px"><path fill="#f06548" fill-rule="evenodd" d="M135.200 17.700C140.600 6.800 151.700 0 163.800 0H284.200c12.100 0 23.200 6.800 28.600 17.700L320 32h96c17.700 0 32 14.300 32 32s-14.300 32-32 32H32C14.300 96 0 81.700 0 64S14.300 32 32 32h96l7.200-14.300zM32 128H416V448c0 35.300-28.700 64-64 64H96c-35.300 0-64-28.700-64-64V128zm96 64c-8.800 0-16 7.200-16 16V432c0 8.800 7.200 16 16 16s16-7.200 16-16V208c0-8.800-7.200-16-16-16zm96 0c-8.800 0-16 7.200-16 16V432c0 8.800 7.200 16 16 16s16-7.200 16-16V208c0-8.800-7.200-16-16-16zm96 0c-8.800 0-16 7.200-16 16V432c0 8.800 7.200 16 16 16s16-7.200 16-16V208c0-8.800-7.200-16-16-16z"/></svg>
<svg width="24.75" height="22.00" viewBox="0 0 576 512" style="position:absolute;left:2170.600px;top:17px"><path fill="#0ab39c" fill-rule="evenodd" d="M312 24V34.500c6.400 1.200 12.600 2.700 18.200 4.200c12.800 3.400 20.400 16.600 17 29.400s-16.600 20.400-29.400 17c-10.900-2.900-21.100-4.900-30.200-5c-7.300-.1-14.700 1.700-19.400 4.400c-2.100 1.300-3.100 2.400-3.500 3c-.3 .5-.7 1.200-.7 2.800c0 .3 0 .5 0 .6c.2 .2 .9 1.200 3.300 2.600c5.800 3.500 14.400 6.200 27.400 10.100l.9 .3c11.100 3.300 25.900 7.800 37.900 15.300c13.700 8.600 26.100 22.900 26.400 44.900c.3 22.500-11.400 38.900-26.700 48.500c-6.700 4.100-13.900 7-21.300 8.800V232c0 13.300-10.700 24-24 24s-24-10.700-24-24V220.600c-9.500-2.300-18.200-5.300-25.600-7.800c-2.100-.7-4.100-1.400-6-2c-12.600-4.200-19.400-17.800-15.200-30.400s17.800-19.400 30.400-15.200c2.600 .9 5 1.700 7.300 2.500c13.600 4.600 23.400 7.900 33.900 8.300c8 .3 15.100-1.600 19.200-4.100c1.900-1.200 2.800-2.200 3.200-2.900c.4-.6 .9-1.800 .8-4.100l0-.2c0-1 0-2.100-4-4.600c-5.700-3.600-14.300-6.400-27.100-10.300l-1.900-.6c-10.800-3.200-25-7.500-36.400-14.400c-13.500-8.100-26.500-22-26.600-44.100c-.1-22.900 12.900-38.600 27.700-47.400c6.400-3.800 13.300-6.400 20.200-8.200V24c0-13.300 10.700-24 24-24s24 10.700 24 24zM568.200 336.300c13.100 17.800 9.300 42.800-8.500 55.900L433.100 485.500c-23.400 17.200-51.600 26.500-80.700 26.500H192 32c-17.700 0-32-14.300-32-32V416c0-17.700 14.300-32 32-32H68.800l44.900-36c22.700-18.200 50.900-28 80-28H272h16 64c17.700 0 32 14.300 32 32s-14.300 32-32 32H288 272c-8.800 0-16 7.200-16 16s7.200 16 16 16H392.600l119.700-88.200c17.800-13.100 42.800-9.300 55.900 8.500z"/></svg>
<svg width="22.00" height="22.00" viewBox="0 0 512 512" style="position:absolute;left:2216px;top:16.800px"><path fill="#299cdb" fill-rule="evenodd" d="M498.100 5.600c10.100 7 15.400 19.100 13.500 31.200l-64 416c-1.500 9.700-7.400 18.200-16 23s-18.900 5.400-28 1.600L284 427.700l-68.500 74.100c-8.900 9.700-22.900 12.900-35.200 8.100S160 493.200 160 480V396.400c0-4 1.500-7.800 4.200-10.700L331.800 202.800c5.800-6.300 5.600-16-.400-22s-15.700-6.400-22-.700L106 360.800 17.700 316.600C7.100 311.300 .3 300.700 0 288.900s5.900-22.800 16.100-28.700l448-256c10.700-6.100 23.900-5.500 34 1.400z"/></svg>
</div>
<div class="row" style="top:823.70px;height:60.70px;background:#fafafa">
<div class="t " style="top:21.41px;font-size:17px;left:13px;color:#212529;">571</div><div class="t " style="top:21.41px;font-size:17px;left:146px;color:#212529;">234</div><div class="t " style="top:21.41px;font-size:17px;left:1955px;color:#212529;">Unpaid</div>
<svg width="22.00" height="22.00" viewBox="0 0 512 512" style="position:absolute;left:2088px;top:17.800px"><path fill="#1f626b" fill-rule="evenodd" d="M288 32c0-17.700-14.300-32-32-32s-32 14.300-32 32V274.700l-73.400-73.400c-12.500-12.500-32.800-12.500-45.300 0s-12.500 32.800 0 45.300l128 128c12.500 12.500 32.800 12.500 45.300 0l128-128c12.500-12.500 12.500-32.800 0-45.300s-32.800-12.500-45.300 0L288 274.700V32zM64 352c-35.300 0-64 28.700-64 64v32c0 35.300 28.700 64 64 64H448c35.300 0 64-28.700 64-64V416c0-35.300-28.700-64-64-64H346.500l-45.300 45.300c-25 25-65.500 25-90.500 0L165.500 352H64zm368 56a24 24 0 1 1 0 48 24 24 0 1 1 0-48z"/></svg>
<svg width="19.25" height="22.00" viewBox="0 0 448 512" style="position:absolute;left:2130px;top:17px"><path fill="#f06548" fill-rule="evenodd" d="M135.200 17.700C140.600 6.800 151.700 0 163.800 0H284.200c12.100 0 23.200 6.800 28.600 17.700L320 32h96c17.700 0 32 14.300 32 32s-14.300 32-32 32H32C14.300 96 0 81.700 0 64S14.300 32 32 32h96l7.200-14.300zM32 128H416V448c0 35.300-28.700 64-64 64H96c-35.300 0-64-28.700-64-64V128zm96 64c-8.800 0-16 7.200-16 16V432c0 8.800 7.200 16 16 16s16-7.200 16-16V208c0-8.800-7.200-16-16-16zm96 0c-8.800 0-16 7.200-16 16V432c0 8.800 7.200 16 16 16s16-7.200 16-16V208c0-8.800-7.200-16-16-16zm96 0c-8.800 0-16 7.200-16 16V432c0 8.800 7.200 16 16 16s16-7.200 16-16V208c0-8.800-7.200-16-16-16z"/></svg>
<svg width="24.75" height="22.00" viewBox="0 0 576 512" style="position:absolute;left:2170.600px;top:17px"><path fill="#0ab39c" fill-rule="evenodd" d="M312 24V34.500c6.400 1.200 12.600 2.700 18.200 4.200c12.800 3.400 20.400 16.600 17 29.400s-16.600 20.400-29.400 17c-10.900-2.900-21.100-4.900-30.200-5c-7.300-.1-14.700 1.700-19.400 4.400c-2.100 1.300-3.100 2.400-3.500 3c-.3 .5-.7 1.200-.7 2.800c0 .3 0 .5 0 .6c.2 .2 .9 1.200 3.300 2.600c5.800 3.500 14.400 6.200 27.400 10.100l.9 .3c11.100 3.300 25.900 7.800 37.900 15.300c13.700 8.600 26.100 22.900 26.400 44.900c.3 22.500-11.400 38.900-26.700 48.500c-6.700 4.100-13.900 7-21.300 8.800V232c0 13.300-10.700 24-24 24s-24-10.700-24-24V220.600c-9.500-2.300-18.200-5.300-25.600-7.800c-2.100-.7-4.100-1.400-6-2c-12.600-4.200-19.400-17.800-15.200-30.400s17.800-19.400 30.400-15.200c2.600 .9 5 1.700 7.300 2.500c13.600 4.600 23.400 7.900 33.900 8.300c8 .3 15.100-1.600 19.200-4.100c1.900-1.200 2.800-2.200 3.200-2.900c.4-.6 .9-1.800 .8-4.100l0-.2c0-1 0-2.100-4-4.600c-5.700-3.600-14.300-6.400-27.100-10.300l-1.900-.6c-10.800-3.200-25-7.500-36.400-14.400c-13.500-8.100-26.500-22-26.600-44.100c-.1-22.900 12.900-38.600 27.700-47.400c6.400-3.800 13.300-6.400 20.200-8.200V24c0-13.300 10.700-24 24-24s24 10.700 24 24zM568.200 336.300c13.100 17.800 9.300 42.800-8.500 55.900L433.100 485.500c-23.400 17.200-51.600 26.500-80.700 26.500H192 32c-17.700 0-32-14.300-32-32V416c0-17.700 14.300-32 32-32H68.800l44.900-36c22.700-18.200 50.900-28 80-28H272h16 64c17.700 0 32 14.300 32 32s-14.300 32-32 32H288 272c-8.800 0-16 7.200-16 16s7.200 16 16 16H392.600l119.700-88.200c17.800-13.100 42.800-9.300 55.900 8.500z"/></svg>
<svg width="22.00" height="22.00" viewBox="0 0 512 512" style="position:absolute;left:2216px;top:16.800px"><path fill="#299cdb" fill-rule="evenodd" d="M498.100 5.600c10.100 7 15.400 19.100 13.500 31.200l-64 416c-1.500 9.700-7.400 18.200-16 23s-18.900 5.400-28 1.600L284 427.700l-68.500 74.100c-8.900 9.700-22.900 12.900-35.200 8.100S160 493.200 160 480V396.400c0-4 1.500-7.800 4.200-10.700L331.800 202.800c5.800-6.300 5.600-16-.400-22s-15.700-6.400-22-.700L106 360.800 17.700 316.600C7.100 311.300 .3 300.700 0 288.900s5.900-22.800 16.100-28.700l448-256c10.700-6.100 23.900-5.500 34 1.400z"/></svg>
</div>
<div class="row" style="top:884.40px;height:60.70px;background:#fff">
<div class="t " style="top:21.41px;font-size:17px;left:13px;color:#212529;">570</div><div class="t " style="top:21.41px;font-size:17px;left:146px;color:#212529;">233</div><div class="t " style="top:21.41px;font-size:17px;left:1955px;color:#212529;">Unpaid</div>
<svg width="22.00" height="22.00" viewBox="0 0 512 512" style="position:absolute;left:2088px;top:17.800px"><path fill="#1f626b" fill-rule="evenodd" d="M288 32c0-17.700-14.300-32-32-32s-32 14.300-32 32V274.700l-73.400-73.400c-12.500-12.500-32.800-12.500-45.300 0s-12.500 32.800 0 45.300l128 128c12.500 12.500 32.800 12.500 45.300 0l128-128c12.500-12.500 12.500-32.800 0-45.300s-32.800-12.500-45.300 0L288 274.700V32zM64 352c-35.300 0-64 28.700-64 64v32c0 35.300 28.700 64 64 64H448c35.300 0 64-28.700 64-64V416c0-35.300-28.700-64-64-64H346.500l-45.300 45.300c-25 25-65.500 25-90.500 0L165.500 352H64zm368 56a24 24 0 1 1 0 48 24 24 0 1 1 0-48z"/></svg>
<svg width="19.25" height="22.00" viewBox="0 0 448 512" style="position:absolute;left:2130px;top:17px"><path fill="#f06548" fill-rule="evenodd" d="M135.200 17.700C140.600 6.800 151.700 0 163.800 0H284.200c12.100 0 23.200 6.800 28.600 17.700L320 32h96c17.700 0 32 14.300 32 32s-14.300 32-32 32H32C14.300 96 0 81.700 0 64S14.300 32 32 32h96l7.200-14.300zM32 128H416V448c0 35.300-28.700 64-64 64H96c-35.300 0-64-28.700-64-64V128zm96 64c-8.800 0-16 7.200-16 16V432c0 8.800 7.200 16 16 16s16-7.200 16-16V208c0-8.800-7.200-16-16-16zm96 0c-8.800 0-16 7.200-16 16V432c0 8.800 7.200 16 16 16s16-7.200 16-16V208c0-8.800-7.200-16-16-16zm96 0c-8.800 0-16 7.200-16 16V432c0 8.800 7.200 16 16 16s16-7.200 16-16V208c0-8.800-7.200-16-16-16z"/></svg>
<svg width="24.75" height="22.00" viewBox="0 0 576 512" style="position:absolute;left:2170.600px;top:17px"><path fill="#0ab39c" fill-rule="evenodd" d="M312 24V34.500c6.400 1.200 12.600 2.700 18.200 4.200c12.800 3.400 20.400 16.600 17 29.400s-16.600 20.400-29.400 17c-10.900-2.900-21.100-4.900-30.200-5c-7.300-.1-14.700 1.700-19.400 4.400c-2.100 1.300-3.100 2.400-3.500 3c-.3 .5-.7 1.200-.7 2.800c0 .3 0 .5 0 .6c.2 .2 .9 1.200 3.300 2.600c5.800 3.500 14.400 6.200 27.400 10.100l.9 .3c11.100 3.300 25.900 7.800 37.900 15.300c13.700 8.600 26.100 22.900 26.400 44.900c.3 22.500-11.400 38.900-26.700 48.500c-6.700 4.100-13.900 7-21.300 8.800V232c0 13.300-10.700 24-24 24s-24-10.700-24-24V220.600c-9.500-2.300-18.200-5.300-25.600-7.800c-2.100-.7-4.100-1.400-6-2c-12.600-4.200-19.400-17.800-15.200-30.400s17.800-19.400 30.400-15.200c2.600 .9 5 1.700 7.300 2.500c13.600 4.600 23.400 7.900 33.900 8.300c8 .3 15.100-1.600 19.200-4.100c1.900-1.200 2.800-2.200 3.200-2.900c.4-.6 .9-1.800 .8-4.100l0-.2c0-1 0-2.100-4-4.600c-5.700-3.600-14.300-6.400-27.100-10.300l-1.900-.6c-10.800-3.200-25-7.500-36.400-14.400c-13.500-8.100-26.500-22-26.600-44.100c-.1-22.900 12.900-38.600 27.700-47.400c6.400-3.800 13.300-6.400 20.200-8.200V24c0-13.300 10.700-24 24-24s24 10.700 24 24zM568.200 336.300c13.100 17.800 9.300 42.800-8.500 55.900L433.100 485.500c-23.400 17.200-51.600 26.500-80.700 26.500H192 32c-17.700 0-32-14.300-32-32V416c0-17.700 14.300-32 32-32H68.800l44.900-36c22.700-18.200 50.900-28 80-28H272h16 64c17.700 0 32 14.300 32 32s-14.300 32-32 32H288 272c-8.800 0-16 7.200-16 16s7.200 16 16 16H392.600l119.700-88.200c17.800-13.100 42.800-9.300 55.900 8.500z"/></svg>
<svg width="22.00" height="22.00" viewBox="0 0 512 512" style="position:absolute;left:2216px;top:16.800px"><path fill="#299cdb" fill-rule="evenodd" d="M498.100 5.600c10.100 7 15.400 19.100 13.500 31.200l-64 416c-1.500 9.700-7.400 18.200-16 23s-18.900 5.400-28 1.600L284 427.700l-68.500 74.100c-8.900 9.700-22.900 12.900-35.200 8.100S160 493.200 160 480V396.400c0-4 1.500-7.800 4.200-10.700L331.800 202.800c5.800-6.300 5.600-16-.400-22s-15.700-6.400-22-.700L106 360.800 17.700 316.600C7.100 311.300 .3 300.700 0 288.900s5.900-22.800 16.100-28.700l448-256c10.700-6.100 23.900-5.500 34 1.400z"/></svg>
</div>
<div class="row" style="top:945.10px;height:60.70px;background:#fafafa">
<div class="t " style="top:21.41px;font-size:17px;left:13px;color:#212529;">569</div><div class="t " style="top:21.41px;font-size:17px;left:146px;color:#212529;">232</div><div class="t " style="top:21.41px;font-size:17px;left:1955px;color:#212529;">Unpaid</div>
<svg width="22.00" height="22.00" viewBox="0 0 512 512" style="position:absolute;left:2088px;top:17.800px"><path fill="#1f626b" fill-rule="evenodd" d="M288 32c0-17.700-14.300-32-32-32s-32 14.300-32 32V274.700l-73.400-73.400c-12.500-12.500-32.800-12.500-45.300 0s-12.500 32.800 0 45.300l128 128c12.500 12.500 32.800 12.500 45.300 0l128-128c12.500-12.500 12.500-32.800 0-45.300s-32.800-12.500-45.300 0L288 274.700V32zM64 352c-35.300 0-64 28.700-64 64v32c0 35.300 28.700 64 64 64H448c35.300 0 64-28.700 64-64V416c0-35.300-28.700-64-64-64H346.500l-45.300 45.300c-25 25-65.500 25-90.500 0L165.500 352H64zm368 56a24 24 0 1 1 0 48 24 24 0 1 1 0-48z"/></svg>
<svg width="19.25" height="22.00" viewBox="0 0 448 512" style="position:absolute;left:2130px;top:17px"><path fill="#f06548" fill-rule="evenodd" d="M135.200 17.700C140.600 6.800 151.700 0 163.800 0H284.200c12.100 0 23.200 6.800 28.600 17.700L320 32h96c17.700 0 32 14.300 32 32s-14.300 32-32 32H32C14.300 96 0 81.700 0 64S14.300 32 32 32h96l7.200-14.300zM32 128H416V448c0 35.300-28.700 64-64 64H96c-35.300 0-64-28.700-64-64V128zm96 64c-8.800 0-16 7.200-16 16V432c0 8.800 7.200 16 16 16s16-7.200 16-16V208c0-8.800-7.200-16-16-16zm96 0c-8.800 0-16 7.200-16 16V432c0 8.800 7.200 16 16 16s16-7.200 16-16V208c0-8.800-7.200-16-16-16zm96 0c-8.800 0-16 7.200-16 16V432c0 8.800 7.200 16 16 16s16-7.200 16-16V208c0-8.800-7.200-16-16-16z"/></svg>
<svg width="24.75" height="22.00" viewBox="0 0 576 512" style="position:absolute;left:2170.600px;top:17px"><path fill="#0ab39c" fill-rule="evenodd" d="M312 24V34.500c6.400 1.200 12.600 2.700 18.200 4.200c12.800 3.400 20.400 16.600 17 29.400s-16.600 20.400-29.400 17c-10.900-2.900-21.100-4.900-30.200-5c-7.300-.1-14.700 1.700-19.400 4.400c-2.100 1.300-3.100 2.400-3.500 3c-.3 .5-.7 1.200-.7 2.800c0 .3 0 .5 0 .6c.2 .2 .9 1.200 3.300 2.600c5.800 3.500 14.400 6.200 27.400 10.100l.9 .3c11.100 3.300 25.900 7.800 37.900 15.300c13.700 8.600 26.100 22.900 26.400 44.900c.3 22.500-11.400 38.900-26.700 48.500c-6.700 4.100-13.900 7-21.300 8.800V232c0 13.300-10.700 24-24 24s-24-10.700-24-24V220.600c-9.500-2.300-18.200-5.300-25.600-7.800c-2.100-.7-4.100-1.400-6-2c-12.600-4.200-19.400-17.800-15.200-30.400s17.800-19.400 30.400-15.200c2.600 .9 5 1.700 7.300 2.500c13.600 4.600 23.400 7.900 33.900 8.300c8 .3 15.100-1.600 19.200-4.100c1.900-1.200 2.800-2.200 3.200-2.900c.4-.6 .9-1.800 .8-4.100l0-.2c0-1 0-2.100-4-4.600c-5.700-3.600-14.300-6.400-27.100-10.300l-1.900-.6c-10.800-3.200-25-7.500-36.400-14.400c-13.500-8.100-26.500-22-26.600-44.100c-.1-22.900 12.900-38.600 27.700-47.400c6.400-3.800 13.300-6.400 20.200-8.200V24c0-13.300 10.700-24 24-24s24 10.700 24 24zM568.200 336.300c13.100 17.800 9.300 42.800-8.500 55.900L433.100 485.500c-23.400 17.200-51.600 26.500-80.700 26.500H192 32c-17.700 0-32-14.300-32-32V416c0-17.700 14.300-32 32-32H68.800l44.900-36c22.700-18.200 50.900-28 80-28H272h16 64c17.700 0 32 14.300 32 32s-14.300 32-32 32H288 272c-8.800 0-16 7.200-16 16s7.200 16 16 16H392.600l119.700-88.200c17.800-13.100 42.800-9.300 55.900 8.500z"/></svg>
<svg width="22.00" height="22.00" viewBox="0 0 512 512" style="position:absolute;left:2216px;top:16.800px"><path fill="#299cdb" fill-rule="evenodd" d="M498.100 5.600c10.100 7 15.400 19.100 13.500 31.200l-64 416c-1.500 9.700-7.400 18.200-16 23s-18.900 5.400-28 1.600L284 427.700l-68.500 74.100c-8.900 9.700-22.900 12.900-35.200 8.100S160 493.200 160 480V396.400c0-4 1.500-7.800 4.200-10.700L331.800 202.800c5.800-6.300 5.600-16-.400-22s-15.700-6.400-22-.700L106 360.800 17.700 316.600C7.100 311.300 .3 300.700 0 288.900s5.900-22.800 16.100-28.700l448-256c10.700-6.100 23.900-5.500 34 1.400z"/></svg>
</div>
<div class="row" style="top:1005.80px;height:60.70px;background:#fff">
<div class="t " style="top:21.41px;font-size:17px;left:13px;color:#212529;">568</div><div class="t " style="top:21.41px;font-size:17px;left:146px;color:#212529;">231</div><div class="t " style="top:21.41px;font-size:17px;left:1955px;color:#212529;">Unpaid</div>
<svg width="22.00" height="22.00" viewBox="0 0 512 512" style="position:absolute;left:2088px;top:17.800px"><path fill="#1f626b" fill-rule="evenodd" d="M288 32c0-17.700-14.300-32-32-32s-32 14.300-32 32V274.700l-73.400-73.400c-12.500-12.500-32.800-12.500-45.300 0s-12.500 32.800 0 45.300l128 128c12.500 12.500 32.800 12.500 45.300 0l128-128c12.500-12.500 12.500-32.800 0-45.300s-32.800-12.500-45.300 0L288 274.700V32zM64 352c-35.300 0-64 28.700-64 64v32c0 35.300 28.700 64 64 64H448c35.300 0 64-28.700 64-64V416c0-35.300-28.700-64-64-64H346.500l-45.300 45.300c-25 25-65.500 25-90.500 0L165.500 352H64zm368 56a24 24 0 1 1 0 48 24 24 0 1 1 0-48z"/></svg>
<svg width="19.25" height="22.00" viewBox="0 0 448 512" style="position:absolute;left:2130px;top:17px"><path fill="#f06548" fill-rule="evenodd" d="M135.200 17.700C140.600 6.800 151.700 0 163.800 0H284.200c12.100 0 23.200 6.800 28.600 17.700L320 32h96c17.700 0 32 14.300 32 32s-14.300 32-32 32H32C14.300 96 0 81.700 0 64S14.300 32 32 32h96l7.200-14.300zM32 128H416V448c0 35.300-28.700 64-64 64H96c-35.300 0-64-28.700-64-64V128zm96 64c-8.800 0-16 7.200-16 16V432c0 8.800 7.200 16 16 16s16-7.200 16-16V208c0-8.800-7.200-16-16-16zm96 0c-8.800 0-16 7.200-16 16V432c0 8.800 7.200 16 16 16s16-7.200 16-16V208c0-8.800-7.200-16-16-16zm96 0c-8.800 0-16 7.200-16 16V432c0 8.800 7.200 16 16 16s16-7.200 16-16V208c0-8.800-7.200-16-16-16z"/></svg>
<svg width="24.75" height="22.00" viewBox="0 0 576 512" style="position:absolute;left:2170.600px;top:17px"><path fill="#0ab39c" fill-rule="evenodd" d="M312 24V34.500c6.400 1.200 12.600 2.700 18.200 4.200c12.800 3.400 20.400 16.600 17 29.400s-16.600 20.400-29.400 17c-10.900-2.900-21.100-4.900-30.200-5c-7.300-.1-14.700 1.700-19.400 4.400c-2.100 1.300-3.100 2.400-3.500 3c-.3 .5-.7 1.200-.7 2.800c0 .3 0 .5 0 .6c.2 .2 .9 1.200 3.300 2.600c5.800 3.500 14.400 6.200 27.400 10.100l.9 .3c11.100 3.300 25.900 7.800 37.900 15.300c13.700 8.600 26.100 22.900 26.400 44.900c.3 22.500-11.400 38.900-26.700 48.500c-6.700 4.100-13.900 7-21.300 8.800V232c0 13.300-10.700 24-24 24s-24-10.700-24-24V220.600c-9.500-2.300-18.200-5.300-25.600-7.800c-2.100-.7-4.100-1.400-6-2c-12.600-4.200-19.400-17.800-15.200-30.400s17.800-19.400 30.400-15.200c2.600 .9 5 1.700 7.300 2.500c13.600 4.600 23.400 7.900 33.900 8.300c8 .3 15.100-1.600 19.200-4.100c1.900-1.200 2.800-2.200 3.200-2.900c.4-.6 .9-1.800 .8-4.100l0-.2c0-1 0-2.100-4-4.600c-5.700-3.600-14.300-6.400-27.100-10.300l-1.900-.6c-10.800-3.200-25-7.500-36.400-14.400c-13.500-8.100-26.500-22-26.600-44.100c-.1-22.900 12.900-38.600 27.700-47.400c6.400-3.800 13.300-6.400 20.200-8.200V24c0-13.300 10.700-24 24-24s24 10.700 24 24zM568.200 336.300c13.100 17.800 9.300 42.800-8.500 55.900L433.100 485.500c-23.400 17.200-51.600 26.500-80.700 26.500H192 32c-17.700 0-32-14.300-32-32V416c0-17.700 14.300-32 32-32H68.800l44.900-36c22.700-18.200 50.900-28 80-28H272h16 64c17.700 0 32 14.300 32 32s-14.300 32-32 32H288 272c-8.800 0-16 7.200-16 16s7.200 16 16 16H392.600l119.700-88.200c17.800-13.100 42.800-9.300 55.900 8.500z"/></svg>
<svg width="22.00" height="22.00" viewBox="0 0 512 512" style="position:absolute;left:2216px;top:16.800px"><path fill="#299cdb" fill-rule="evenodd" d="M498.100 5.600c10.100 7 15.400 19.100 13.500 31.200l-64 416c-1.500 9.700-7.400 18.200-16 23s-18.900 5.400-28 1.600L284 427.700l-68.500 74.100c-8.900 9.700-22.900 12.900-35.200 8.100S160 493.200 160 480V396.400c0-4 1.500-7.800 4.200-10.700L331.800 202.800c5.800-6.300 5.600-16-.400-22s-15.700-6.400-22-.700L106 360.800 17.700 316.600C7.100 311.300 .3 300.700 0 288.900s5.900-22.800 16.100-28.700l448-256c10.700-6.100 23.900-5.500 34 1.400z"/></svg>
</div>
<div class="row" style="top:1066.50px;height:60.70px;background:#fafafa">
<div class="t " style="top:21.41px;font-size:17px;left:13px;color:#212529;">567</div><div class="t " style="top:21.41px;font-size:17px;left:146px;color:#212529;">230</div><div class="t " style="top:21.41px;font-size:17px;left:1955px;color:#212529;">Unpaid</div>
<svg width="22.00" height="22.00" viewBox="0 0 512 512" style="position:absolute;left:2088px;top:17.800px"><path fill="#1f626b" fill-rule="evenodd" d="M288 32c0-17.700-14.300-32-32-32s-32 14.300-32 32V274.700l-73.400-73.400c-12.500-12.500-32.800-12.500-45.300 0s-12.500 32.800 0 45.300l128 128c12.500 12.500 32.800 12.500 45.300 0l128-128c12.500-12.500 12.500-32.800 0-45.300s-32.800-12.500-45.300 0L288 274.700V32zM64 352c-35.300 0-64 28.700-64 64v32c0 35.300 28.700 64 64 64H448c35.300 0 64-28.700 64-64V416c0-35.300-28.700-64-64-64H346.500l-45.300 45.300c-25 25-65.500 25-90.500 0L165.500 352H64zm368 56a24 24 0 1 1 0 48 24 24 0 1 1 0-48z"/></svg>
<svg width="19.25" height="22.00" viewBox="0 0 448 512" style="position:absolute;left:2130px;top:17px"><path fill="#f06548" fill-rule="evenodd" d="M135.200 17.700C140.600 6.800 151.700 0 163.800 0H284.200c12.100 0 23.200 6.800 28.600 17.700L320 32h96c17.700 0 32 14.300 32 32s-14.300 32-32 32H32C14.300 96 0 81.700 0 64S14.300 32 32 32h96l7.200-14.300zM32 128H416V448c0 35.300-28.700 64-64 64H96c-35.300 0-64-28.700-64-64V128zm96 64c-8.800 0-16 7.200-16 16V432c0 8.800 7.200 16 16 16s16-7.200 16-16V208c0-8.800-7.200-16-16-16zm96 0c-8.800 0-16 7.200-16 16V432c0 8.800 7.200 16 16 16s16-7.200 16-16V208c0-8.800-7.200-16-16-16zm96 0c-8.800 0-16 7.200-16 16V432c0 8.800 7.200 16 16 16s16-7.200 16-16V208c0-8.800-7.200-16-16-16z"/></svg>
<svg width="24.75" height="22.00" viewBox="0 0 576 512" style="position:absolute;left:2170.600px;top:17px"><path fill="#0ab39c" fill-rule="evenodd" d="M312 24V34.500c6.400 1.200 12.600 2.700 18.200 4.200c12.800 3.400 20.400 16.600 17 29.400s-16.600 20.400-29.400 17c-10.900-2.900-21.100-4.900-30.200-5c-7.300-.1-14.700 1.700-19.400 4.400c-2.100 1.300-3.100 2.400-3.500 3c-.3 .5-.7 1.200-.7 2.800c0 .3 0 .5 0 .6c.2 .2 .9 1.200 3.300 2.600c5.800 3.500 14.400 6.200 27.400 10.100l.9 .3c11.100 3.300 25.900 7.800 37.900 15.300c13.700 8.600 26.100 22.900 26.400 44.900c.3 22.500-11.400 38.900-26.700 48.500c-6.700 4.100-13.900 7-21.300 8.800V232c0 13.300-10.700 24-24 24s-24-10.700-24-24V220.600c-9.500-2.300-18.200-5.300-25.600-7.800c-2.100-.7-4.100-1.400-6-2c-12.600-4.200-19.400-17.800-15.200-30.400s17.800-19.400 30.400-15.200c2.600 .9 5 1.700 7.300 2.500c13.600 4.600 23.400 7.900 33.900 8.300c8 .3 15.100-1.600 19.200-4.100c1.900-1.200 2.800-2.200 3.200-2.900c.4-.6 .9-1.800 .8-4.100l0-.2c0-1 0-2.100-4-4.600c-5.700-3.600-14.300-6.400-27.100-10.300l-1.900-.6c-10.800-3.200-25-7.500-36.400-14.400c-13.500-8.100-26.500-22-26.600-44.100c-.1-22.900 12.900-38.600 27.700-47.400c6.400-3.800 13.300-6.400 20.200-8.200V24c0-13.300 10.700-24 24-24s24 10.700 24 24zM568.200 336.300c13.100 17.800 9.300 42.800-8.500 55.900L433.100 485.500c-23.400 17.200-51.600 26.500-80.700 26.500H192 32c-17.700 0-32-14.300-32-32V416c0-17.700 14.300-32 32-32H68.800l44.900-36c22.700-18.200 50.900-28 80-28H272h16 64c17.700 0 32 14.300 32 32s-14.300 32-32 32H288 272c-8.800 0-16 7.200-16 16s7.200 16 16 16H392.600l119.700-88.200c17.800-13.100 42.800-9.300 55.900 8.500z"/></svg>
<svg width="22.00" height="22.00" viewBox="0 0 512 512" style="position:absolute;left:2216px;top:16.800px"><path fill="#299cdb" fill-rule="evenodd" d="M498.100 5.600c10.100 7 15.400 19.100 13.500 31.200l-64 416c-1.500 9.700-7.400 18.200-16 23s-18.900 5.400-28 1.600L284 427.700l-68.500 74.100c-8.900 9.700-22.900 12.900-35.200 8.100S160 493.200 160 480V396.400c0-4 1.500-7.800 4.200-10.700L331.800 202.800c5.800-6.300 5.600-16-.400-22s-15.700-6.400-22-.700L106 360.800 17.700 316.600C7.100 311.300 .3 300.700 0 288.900s5.900-22.800 16.100-28.700l448-256c10.700-6.100 23.900-5.500 34 1.400z"/></svg>
</div>
<div class="row" style="top:1127.20px;height:60.70px;background:#fff">
<div class="t " style="top:21.41px;font-size:17px;left:13px;color:#212529;">566</div><div class="t " style="top:21.41px;font-size:17px;left:146px;color:#212529;">229</div><div class="t " style="top:21.41px;font-size:17px;left:1955px;color:#212529;">Unpaid</div>
<svg width="22.00" height="22.00" viewBox="0 0 512 512" style="position:absolute;left:2088px;top:17.800px"><path fill="#1f626b" fill-rule="evenodd" d="M288 32c0-17.700-14.300-32-32-32s-32 14.300-32 32V274.700l-73.400-73.400c-12.500-12.500-32.800-12.500-45.300 0s-12.500 32.800 0 45.300l128 128c12.500 12.500 32.800 12.500 45.300 0l128-128c12.500-12.500 12.500-32.800 0-45.300s-32.800-12.500-45.300 0L288 274.700V32zM64 352c-35.300 0-64 28.700-64 64v32c0 35.300 28.700 64 64 64H448c35.300 0 64-28.700 64-64V416c0-35.300-28.700-64-64-64H346.500l-45.300 45.300c-25 25-65.500 25-90.500 0L165.500 352H64zm368 56a24 24 0 1 1 0 48 24 24 0 1 1 0-48z"/></svg>
<svg width="19.25" height="22.00" viewBox="0 0 448 512" style="position:absolute;left:2130px;top:17px"><path fill="#f06548" fill-rule="evenodd" d="M135.200 17.700C140.600 6.800 151.700 0 163.800 0H284.200c12.100 0 23.200 6.800 28.600 17.700L320 32h96c17.700 0 32 14.300 32 32s-14.300 32-32 32H32C14.300 96 0 81.700 0 64S14.300 32 32 32h96l7.200-14.300zM32 128H416V448c0 35.300-28.700 64-64 64H96c-35.300 0-64-28.700-64-64V128zm96 64c-8.800 0-16 7.200-16 16V432c0 8.800 7.200 16 16 16s16-7.200 16-16V208c0-8.800-7.200-16-16-16zm96 0c-8.800 0-16 7.200-16 16V432c0 8.800 7.200 16 16 16s16-7.200 16-16V208c0-8.800-7.200-16-16-16zm96 0c-8.800 0-16 7.200-16 16V432c0 8.800 7.200 16 16 16s16-7.200 16-16V208c0-8.800-7.200-16-16-16z"/></svg>
<svg width="24.75" height="22.00" viewBox="0 0 576 512" style="position:absolute;left:2170.600px;top:17px"><path fill="#0ab39c" fill-rule="evenodd" d="M312 24V34.500c6.400 1.200 12.600 2.700 18.200 4.200c12.800 3.400 20.400 16.600 17 29.400s-16.600 20.400-29.400 17c-10.900-2.900-21.100-4.900-30.200-5c-7.300-.1-14.700 1.700-19.400 4.400c-2.100 1.300-3.100 2.400-3.500 3c-.3 .5-.7 1.200-.7 2.800c0 .3 0 .5 0 .6c.2 .2 .9 1.200 3.300 2.600c5.800 3.500 14.400 6.200 27.400 10.100l.9 .3c11.100 3.300 25.900 7.800 37.900 15.300c13.700 8.600 26.100 22.900 26.400 44.900c.3 22.500-11.400 38.900-26.700 48.500c-6.700 4.100-13.900 7-21.300 8.800V232c0 13.300-10.700 24-24 24s-24-10.700-24-24V220.600c-9.500-2.300-18.200-5.300-25.600-7.800c-2.100-.7-4.100-1.400-6-2c-12.600-4.200-19.400-17.800-15.200-30.400s17.800-19.400 30.400-15.200c2.600 .9 5 1.700 7.300 2.500c13.600 4.600 23.400 7.900 33.900 8.300c8 .3 15.100-1.600 19.200-4.100c1.900-1.200 2.800-2.200 3.200-2.900c.4-.6 .9-1.800 .8-4.100l0-.2c0-1 0-2.100-4-4.600c-5.700-3.600-14.300-6.400-27.100-10.300l-1.900-.6c-10.800-3.200-25-7.500-36.400-14.400c-13.500-8.100-26.500-22-26.600-44.100c-.1-22.900 12.900-38.600 27.700-47.400c6.400-3.800 13.300-6.400 20.200-8.200V24c0-13.300 10.700-24 24-24s24 10.700 24 24zM568.200 336.300c13.100 17.800 9.300 42.800-8.500 55.900L433.100 485.500c-23.400 17.200-51.600 26.500-80.700 26.500H192 32c-17.700 0-32-14.300-32-32V416c0-17.700 14.300-32 32-32H68.800l44.900-36c22.700-18.200 50.900-28 80-28H272h16 64c17.700 0 32 14.300 32 32s-14.300 32-32 32H288 272c-8.800 0-16 7.200-16 16s7.200 16 16 16H392.600l119.700-88.200c17.800-13.100 42.800-9.300 55.900 8.500z"/></svg>
<svg width="22.00" height="22.00" viewBox="0 0 512 512" style="position:absolute;left:2216px;top:16.800px"><path fill="#299cdb" fill-rule="evenodd" d="M498.100 5.600c10.100 7 15.400 19.100 13.500 31.200l-64 416c-1.500 9.700-7.400 18.200-16 23s-18.900 5.400-28 1.600L284 427.700l-68.500 74.100c-8.900 9.700-22.900 12.900-35.200 8.100S160 493.200 160 480V396.400c0-4 1.500-7.800 4.200-10.700L331.800 202.800c5.800-6.300 5.600-16-.400-22s-15.700-6.400-22-.700L106 360.800 17.700 316.600C7.100 311.300 .3 300.700 0 288.900s5.900-22.800 16.100-28.700l448-256c10.700-6.100 23.900-5.500 34 1.400z"/></svg>
</div>
<div class="row" style="top:1187.90px;height:60.70px;background:#fafafa">
<div class="t " style="top:21.41px;font-size:17px;left:13px;color:#212529;">565</div><div class="t " style="top:21.41px;font-size:17px;left:146px;color:#212529;">228</div><div class="t " style="top:21.41px;font-size:17px;left:1955px;color:#212529;">Unpaid</div>
<svg width="22.00" height="22.00" viewBox="0 0 512 512" style="position:absolute;left:2088px;top:17.800px"><path fill="#1f626b" fill-rule="evenodd" d="M288 32c0-17.700-14.300-32-32-32s-32 14.300-32 32V274.700l-73.400-73.400c-12.500-12.500-32.800-12.500-45.300 0s-12.500 32.800 0 45.300l128 128c12.500 12.500 32.800 12.500 45.300 0l128-128c12.500-12.500 12.500-32.800 0-45.300s-32.800-12.500-45.300 0L288 274.700V32zM64 352c-35.300 0-64 28.700-64 64v32c0 35.300 28.700 64 64 64H448c35.300 0 64-28.700 64-64V416c0-35.300-28.700-64-64-64H346.500l-45.300 45.300c-25 25-65.500 25-90.500 0L165.500 352H64zm368 56a24 24 0 1 1 0 48 24 24 0 1 1 0-48z"/></svg>
<svg width="19.25" height="22.00" viewBox="0 0 448 512" style="position:absolute;left:2130px;top:17px"><path fill="#f06548" fill-rule="evenodd" d="M135.200 17.700C140.600 6.800 151.700 0 163.800 0H284.200c12.100 0 23.200 6.800 28.600 17.700L320 32h96c17.700 0 32 14.300 32 32s-14.300 32-32 32H32C14.300 96 0 81.700 0 64S14.300 32 32 32h96l7.200-14.300zM32 128H416V448c0 35.300-28.700 64-64 64H96c-35.300 0-64-28.700-64-64V128zm96 64c-8.800 0-16 7.200-16 16V432c0 8.800 7.200 16 16 16s16-7.200 16-16V208c0-8.800-7.200-16-16-16zm96 0c-8.800 0-16 7.200-16 16V432c0 8.800 7.200 16 16 16s16-7.200 16-16V208c0-8.800-7.200-16-16-16zm96 0c-8.800 0-16 7.200-16 16V432c0 8.800 7.200 16 16 16s16-7.200 16-16V208c0-8.800-7.200-16-16-16z"/></svg>
<svg width="24.75" height="22.00" viewBox="0 0 576 512" style="position:absolute;left:2170.600px;top:17px"><path fill="#0ab39c" fill-rule="evenodd" d="M312 24V34.500c6.400 1.200 12.600 2.700 18.200 4.200c12.800 3.400 20.400 16.600 17 29.400s-16.600 20.400-29.400 17c-10.900-2.900-21.100-4.900-30.200-5c-7.300-.1-14.700 1.700-19.400 4.400c-2.100 1.300-3.100 2.400-3.500 3c-.3 .5-.7 1.200-.7 2.800c0 .3 0 .5 0 .6c.2 .2 .9 1.200 3.300 2.600c5.800 3.500 14.400 6.200 27.400 10.100l.9 .3c11.100 3.300 25.900 7.800 37.900 15.300c13.700 8.600 26.100 22.900 26.400 44.900c.3 22.500-11.400 38.900-26.700 48.500c-6.700 4.100-13.900 7-21.300 8.800V232c0 13.300-10.700 24-24 24s-24-10.700-24-24V220.600c-9.500-2.300-18.200-5.300-25.600-7.800c-2.100-.7-4.100-1.400-6-2c-12.600-4.200-19.400-17.800-15.200-30.400s17.800-19.400 30.400-15.200c2.600 .9 5 1.700 7.300 2.500c13.600 4.600 23.400 7.900 33.900 8.300c8 .3 15.100-1.600 19.200-4.100c1.900-1.200 2.800-2.200 3.200-2.900c.4-.6 .9-1.800 .8-4.100l0-.2c0-1 0-2.100-4-4.600c-5.700-3.600-14.300-6.400-27.100-10.300l-1.900-.6c-10.800-3.200-25-7.500-36.400-14.400c-13.500-8.100-26.500-22-26.600-44.100c-.1-22.900 12.900-38.600 27.700-47.400c6.400-3.800 13.300-6.400 20.200-8.200V24c0-13.300 10.700-24 24-24s24 10.700 24 24zM568.200 336.300c13.100 17.800 9.300 42.800-8.500 55.900L433.100 485.500c-23.400 17.200-51.600 26.500-80.700 26.500H192 32c-17.700 0-32-14.300-32-32V416c0-17.700 14.300-32 32-32H68.800l44.900-36c22.700-18.200 50.900-28 80-28H272h16 64c17.700 0 32 14.300 32 32s-14.300 32-32 32H288 272c-8.800 0-16 7.200-16 16s7.200 16 16 16H392.600l119.700-88.200c17.800-13.100 42.800-9.300 55.900 8.500z"/></svg>
<svg width="22.00" height="22.00" viewBox="0 0 512 512" style="position:absolute;left:2216px;top:16.800px"><path fill="#299cdb" fill-rule="evenodd" d="M498.100 5.600c10.100 7 15.400 19.100 13.500 31.200l-64 416c-1.500 9.700-7.400 18.200-16 23s-18.900 5.400-28 1.600L284 427.700l-68.500 74.100c-8.900 9.700-22.900 12.900-35.200 8.100S160 493.200 160 480V396.400c0-4 1.500-7.800 4.200-10.700L331.800 202.800c5.800-6.300 5.600-16-.400-22s-15.700-6.400-22-.700L106 360.800 17.700 316.600C7.100 311.300 .3 300.700 0 288.900s5.900-22.800 16.100-28.700l448-256c10.700-6.100 23.900-5.500 34 1.400z"/></svg>
</div>
<div class="row" style="top:1248.60px;height:60.70px;background:#fff">
<div class="t " style="top:21.41px;font-size:17px;left:13px;color:#212529;">564</div><div class="t " style="top:21.41px;font-size:17px;left:146px;color:#212529;">227</div><div class="t " style="top:21.41px;font-size:17px;left:1955px;color:#212529;">Unpaid</div>
<svg width="22.00" height="22.00" viewBox="0 0 512 512" style="position:absolute;left:2088px;top:17.800px"><path fill="#1f626b" fill-rule="evenodd" d="M288 32c0-17.700-14.300-32-32-32s-32 14.300-32 32V274.700l-73.400-73.400c-12.500-12.500-32.800-12.500-45.300 0s-12.500 32.800 0 45.300l128 128c12.500 12.500 32.800 12.500 45.300 0l128-128c12.500-12.500 12.500-32.800 0-45.300s-32.800-12.500-45.300 0L288 274.700V32zM64 352c-35.300 0-64 28.700-64 64v32c0 35.300 28.700 64 64 64H448c35.300 0 64-28.700 64-64V416c0-35.300-28.700-64-64-64H346.500l-45.300 45.300c-25 25-65.500 25-90.500 0L165.500 352H64zm368 56a24 24 0 1 1 0 48 24 24 0 1 1 0-48z"/></svg>
<svg width="19.25" height="22.00" viewBox="0 0 448 512" style="position:absolute;left:2130px;top:17px"><path fill="#f06548" fill-rule="evenodd" d="M135.200 17.700C140.600 6.800 151.700 0 163.800 0H284.200c12.100 0 23.200 6.800 28.600 17.700L320 32h96c17.700 0 32 14.300 32 32s-14.300 32-32 32H32C14.300 96 0 81.700 0 64S14.300 32 32 32h96l7.200-14.300zM32 128H416V448c0 35.300-28.700 64-64 64H96c-35.300 0-64-28.700-64-64V128zm96 64c-8.800 0-16 7.200-16 16V432c0 8.800 7.200 16 16 16s16-7.200 16-16V208c0-8.800-7.200-16-16-16zm96 0c-8.800 0-16 7.200-16 16V432c0 8.800 7.200 16 16 16s16-7.200 16-16V208c0-8.800-7.200-16-16-16zm96 0c-8.800 0-16 7.200-16 16V432c0 8.800 7.200 16 16 16s16-7.200 16-16V208c0-8.800-7.200-16-16-16z"/></svg>
<svg width="24.75" height="22.00" viewBox="0 0 576 512" style="position:absolute;left:2170.600px;top:17px"><path fill="#0ab39c" fill-rule="evenodd" d="M312 24V34.500c6.400 1.200 12.600 2.700 18.200 4.200c12.800 3.400 20.400 16.600 17 29.400s-16.600 20.400-29.400 17c-10.900-2.900-21.100-4.900-30.200-5c-7.300-.1-14.700 1.700-19.400 4.400c-2.100 1.300-3.100 2.400-3.500 3c-.3 .5-.7 1.200-.7 2.800c0 .3 0 .5 0 .6c.2 .2 .9 1.200 3.300 2.600c5.800 3.500 14.400 6.200 27.400 10.100l.9 .3c11.100 3.300 25.900 7.800 37.900 15.300c13.700 8.600 26.100 22.900 26.400 44.900c.3 22.500-11.400 38.900-26.700 48.500c-6.700 4.100-13.900 7-21.300 8.800V232c0 13.300-10.700 24-24 24s-24-10.700-24-24V220.600c-9.500-2.300-18.200-5.300-25.600-7.800c-2.100-.7-4.100-1.400-6-2c-12.600-4.200-19.400-17.800-15.200-30.400s17.800-19.400 30.400-15.200c2.600 .9 5 1.700 7.300 2.500c13.600 4.600 23.400 7.900 33.900 8.300c8 .3 15.100-1.600 19.200-4.100c1.900-1.200 2.800-2.200 3.200-2.900c.4-.6 .9-1.800 .8-4.100l0-.2c0-1 0-2.100-4-4.600c-5.700-3.600-14.300-6.400-27.100-10.300l-1.900-.6c-10.800-3.200-25-7.500-36.400-14.400c-13.500-8.100-26.500-22-26.600-44.100c-.1-22.900 12.900-38.600 27.700-47.400c6.400-3.800 13.300-6.400 20.200-8.200V24c0-13.300 10.700-24 24-24s24 10.700 24 24zM568.200 336.300c13.100 17.800 9.300 42.800-8.500 55.900L433.100 485.500c-23.400 17.200-51.600 26.500-80.700 26.500H192 32c-17.700 0-32-14.300-32-32V416c0-17.700 14.300-32 32-32H68.800l44.900-36c22.700-18.200 50.900-28 80-28H272h16 64c17.700 0 32 14.300 32 32s-14.300 32-32 32H288 272c-8.800 0-16 7.200-16 16s7.200 16 16 16H392.600l119.700-88.200c17.800-13.100 42.800-9.300 55.900 8.500z"/></svg>
<svg width="22.00" height="22.00" viewBox="0 0 512 512" style="position:absolute;left:2216px;top:16.800px"><path fill="#299cdb" fill-rule="evenodd" d="M498.100 5.600c10.100 7 15.400 19.100 13.500 31.200l-64 416c-1.500 9.700-7.400 18.200-16 23s-18.900 5.400-28 1.600L284 427.700l-68.500 74.100c-8.900 9.700-22.900 12.900-35.200 8.100S160 493.200 160 480V396.400c0-4 1.500-7.800 4.200-10.700L331.800 202.800c5.800-6.300 5.600-16-.400-22s-15.700-6.400-22-.700L106 360.800 17.700 316.600C7.100 311.300 .3 300.700 0 288.900s5.900-22.800 16.100-28.700l448-256c10.700-6.100 23.900-5.500 34 1.400z"/></svg>
</div>
<svg class="abs" style="left:653px;top:702px" width="1628" height="606" viewBox="653 702 1628 606" shape-rendering="crispEdges"><rect x="653" y="702" width="1628" height="606" fill="#fff"/><rect x="653" y="702" width="1628" height="52" fill="#fafafa"/><rect x="653" y="754" width="1628" height="16" fill="#fbfbfb"/><rect x="653" y="818" width="1628" height="64" fill="#fafafa"/><rect x="653" y="882" width="1628" height="64" fill="#fdfdfd"/><rect x="653" y="946" width="1628" height="64" fill="#fafafa"/><rect x="653" y="1058" width="1628" height="64" fill="#fafafa"/><rect x="653" y="1122" width="1628" height="64" fill="#fefefe"/><rect x="653" y="1186" width="1628" height="64" fill="#fafafa"/><rect x="653" y="722" width="16" height="16" fill="#ebebed"/><rect x="669" y="722" width="16" height="16" fill="#d5d5d7"/><rect x="685" y="722" width="16" height="16" fill="#d6d6d8"/><rect x="701" y="722" width="16" height="16" fill="#d4d4d6"/><rect x="717" y="722" width="16" height="16" fill="#d6d6d8"/><rect x="733" y="722" width="16" height="16" fill="#d4d4d6"/><rect x="749" y="722" width="16" height="16" fill="#d5d5d7"/><rect x="765" y="722" width="16" height="16" fill="#d6d6d8"/><rect x="781" y="722" width="16" height="16" fill="#d5d5d7"/><rect x="797" y="722" width="16" height="16" fill="#f7f7f9"/><rect x="1053" y="722" width="16" height="16" fill="#d8d8da"/><rect x="1069" y="722" width="16" height="16" fill="#e1e1e3"/><rect x="1085" y="722" width="16" height="16" fill="#d8d8da"/><rect x="1101" y="722" width="16" height="16" fill="#e4e4e6"/><rect x="1117" y="722" width="16" height="16" fill="#d4d4d6"/><rect x="1133" y="722" width="16" height="16" fill="#d4d4d6"/><rect x="1149" y="722" width="16" height="16" fill="#f5f5f7"/><rect x="1165" y="722" width="16" height="16" fill="#d8d8da"/><rect x="1181" y="722" width="16" height="16" fill="#e1e1e3"/><rect x="1197" y="722" width="16" height="16" fill="#d8d8da"/><rect x="1213" y="722" width="16" height="16" fill="#dddddf"/><rect x="1229" y="722" width="16" height="16" fill="#d4d4d6"/><rect x="1245" y="722" width="16" height="16" fill="#d6d6d8"/><rect x="1261" y="722" width="16" height="16" fill="#f7f7f9"/><rect x="1613" y="722" width="16" height="16" fill="#d5d5d7"/><rect x="1629" y="722" width="16" height="16" fill="#e5e5e7"/><rect x="1645" y="722" width="16" height="16" fill="#d6d6d8"/><rect x="1661" y="722" width="16" height="16" fill="#e3e3e5"/><rect x="1677" y="722" width="16" height="16" fill="#d6d6d8"/><rect x="1693" y="722" width="16" height="16" fill="#d6d6d8"/><rect x="1709" y="722" width="16" height="16" fill="#f5f5f7"/><rect x="1901" y="722" width="16" height="16" fill="#e1e1e3"/><rect x="1917" y="722" width="16" height="16" fill="#e0e0e2"/><rect x="1933" y="722" width="16" height="16" fill="#d8d8da"/><rect x="1949" y="722" width="16" height="16" fill="#dddddf"/><rect x="1965" y="722" width="16" height="16" fill="#d7d7d9"/><rect x="1981" y="722" width="16" height="16" fill="#dbdbdd"/><rect x="1997" y="722" width="16" height="16" fill="#e0e0e2"/><rect x="2189" y="722" width="16" height="16" fill="#f5f5f7"/><rect x="2205" y="722" width="16" height="16" fill="#d4d4d6"/><rect x="653" y="786" width="16" height="16" fill="#f2f2f4"/><rect x="669" y="786" width="16" height="16" fill="#d9d9db"/><rect x="685" y="786" width="16" height="16" fill="#e4e4e6"/><rect x="701" y="786" width="16" height="16" fill="#dadadc"/><rect x="717" y="786" width="16" height="16" fill="#dbdbdd"/><rect x="733" y="786" width="16" height="16" fill="#dadadc"/><rect x="749" y="786" width="16" height="16" fill="#fcfcfe"/><rect x="1053" y="786" width="16" height="16" fill="#d9d9db"/><rect x="1069" y="786" width="16" height="16" fill="#e6e6e8"/><rect x="1085" y="786" width="16" height="16" fill="#dbdbdd"/><rect x="1101" y="786" width="16" height="16" fill="#e3e3e5"/><rect x="1117" y="786" width="16" height="16" fill="#d7d7d9"/><rect x="1133" y="786" width="16" height="16" fill="#dfdfe1"/><rect x="1149" y="786" width="16" height="16" fill="#fafafc"/><rect x="1165" y="786" width="16" height="16" fill="#d9d9db"/><rect x="1181" y="786" width="16" height="16" fill="#e3e3e5"/><rect x="1197" y="786" width="16" height="16" fill="#dbdbdd"/><rect x="1213" y="786" width="16" height="16" fill="#e4e4e6"/><rect x="1229" y="786" width="16" height="16" fill="#dbdbdd"/><rect x="1245" y="786" width="16" height="16" fill="#d8d8da"/><rect x="1261" y="786" width="16" height="16" fill="#fcfcfe"/><rect x="1613" y="786" width="16" height="16" fill="#e1e1e3"/><rect x="1629" y="786" width="16" height="16" fill="#e7e7e9"/><rect x="1645" y="786" width="16" height="16" fill="#dcdcde"/><rect x="1661" y="786" width="16" height="16" fill="#e9e9eb"/><rect x="1677" y="786" width="16" height="16" fill="#d9d9db"/><rect x="1693" y="786" width="16" height="16" fill="#dbdbdd"/><rect x="1709" y="786" width="16" height="16" fill="#fafafc"/><rect x="1901" y="786" width="16" height="16" fill="#e4e4e6"/><rect x="1917" y="786" width="16" height="16" fill="#e5e5e7"/><rect x="1933" y="786" width="16" height="16" fill="#dadadc"/><rect x="1949" y="786" width="16" height="16" fill="#e1e1e3"/><rect x="1965" y="786" width="16" height="16" fill="#dedee0"/><rect x="1981" y="786" width="16" height="16" fill="#dedee0"/><rect x="1997" y="786" width="16" height="16" fill="#e4e4e6"/><rect x="2189" y="786" width="16" height="16" fill="#fcfcfe"/><rect x="2205" y="786" width="16" height="16" fill="#d8d8da"/><rect x="2221" y="786" width="16" height="16" fill="#e7e7e9"/><rect x="653" y="834" width="16" height="16" fill="#f7f7f9"/><rect x="669" y="834" width="16" height="16" fill="#f1f1f3"/><rect x="685" y="834" width="16" height="16" fill="#f2f2f4"/><rect x="701" y="834" width="16" height="16" fill="#f2f2f4"/><rect x="717" y="834" width="16" height="16" fill="#f1f1f3"/><rect x="733" y="834" width="16" height="16" fill="#f2f2f4"/><rect x="749" y="834" width="16" height="16" fill="#f9f9fb"/><rect x="1053" y="834" width="16" height="16" fill="#f1f1f3"/><rect x="1069" y="834" width="16" height="16" fill="#f4f4f6"/><rect x="1085" y="834" width="16" height="16" fill="#f0f0f2"/><rect x="1101" y="834" width="16" height="16" fill="#f4f4f6"/><rect x="1117" y="834" width="16" height="16" fill="#f1f1f3"/><rect x="1133" y="834" width="16" height="16" fill="#f2f2f4"/><rect x="1149" y="834" width="16" height="16" fill="#f8f8fa"/><rect x="1165" y="834" width="16" height="16" fill="#f1f1f3"/><rect x="1181" y="834" width="16" height="16" fill="#f4f4f6"/><rect x="1197" y="834" width="16" height="16" fill="#f2f2f4"/><rect x="1213" y="834" width="16" height="16" fill="#f5f5f7"/><rect x="1229" y="834" width="16" height="16" fill="#f2f2f4"/><rect x="1245" y="834" width="16" height="16" fill="#f2f2f4"/><rect x="1261" y="834" width="16" height="16" fill="#f9f9fb"/><rect x="1613" y="834" width="16" height="16" fill="#f2f2f4"/><rect x="1629" y="834" width="16" height="16" fill="#f5f5f7"/><rect x="1645" y="834" width="16" height="16" fill="#f3f3f5"/><rect x="1661" y="834" width="16" height="16" fill="#f4f4f6"/><rect x="1677" y="834" width="16" height="16" fill="#f1f1f3"/><rect x="1693" y="834" width="16" height="16" fill="#f2f2f4"/><rect x="1709" y="834" width="16" height="16" fill="#f9f9fb"/><rect x="1901" y="834" width="16" height="16" fill="#f4f4f6"/><rect x="1917" y="834" width="16" height="16" fill="#f4f4f6"/><rect x="1933" y="834" width="16" height="16" fill="#f1f1f3"/><rect x="1949" y="834" width="16" height="16" fill="#f3f3f5"/><rect x="1965" y="834" width="16" height="16" fill="#f2f2f4"/><rect x="1981" y="834" width="16" height="16" fill="#f3f3f5"/><rect x="1997" y="834" width="16" height="16" fill="#f4f4f6"/><rect x="2189" y="834" width="16" height="16" fill="#f9f9fb"/><rect x="2205" y="834" width="16" height="16" fill="#f1f1f3"/><rect x="2221" y="834" width="16" height="16" fill="#f4f4f6"/><rect x="653" y="850" width="16" height="16" fill="#eeeef0"/><rect x="669" y="850" width="16" height="16" fill="#d3d3d5"/><rect x="685" y="850" width="16" height="16" fill="#e1e1e3"/><rect x="701" y="850" width="16" height="16" fill="#d9d9db"/><rect x="717" y="850" width="16" height="16" fill="#d9d9db"/><rect x="733" y="850" width="16" height="16" fill="#d7d7d9"/><rect x="749" y="850" width="16" height="16" fill="#f8f8fa"/><rect x="1053" y="850" width="16" height="16" fill="#d7d7d9"/><rect x="1069" y="850" width="16" height="16" fill="#e1e1e3"/><rect x="1085" y="850" width="16" height="16" fill="#d8d8da"/><rect x="1101" y="850" width="16" height="16" fill="#e6e6e8"/><rect x="1117" y="850" width="16" height="16" fill="#d6d6d8"/><rect x="1133" y="850" width="16" height="16" fill="#dbdbdd"/><rect x="1149" y="850" width="16" height="16" fill="#f5f5f7"/><rect x="1165" y="850" width="16" height="16" fill="#d6d6d8"/><rect x="1181" y="850" width="16" height="16" fill="#dbdbdd"/><rect x="1197" y="850" width="16" height="16" fill="#d9d9db"/><rect x="1213" y="850" width="16" height="16" fill="#e2e2e4"/><rect x="1229" y="850" width="16" height="16" fill="#d6d6d8"/><rect x="1245" y="850" width="16" height="16" fill="#d6d6d8"/><rect x="1261" y="850" width="16" height="16" fill="#f7f7f9"/><rect x="1613" y="850" width="16" height="16" fill="#dedee0"/><rect x="1629" y="850" width="16" height="16" fill="#dfdfe1"/><rect x="1645" y="850" width="16" height="16" fill="#d8d8da"/><rect x="1661" y="850" width="16" height="16" fill="#e1e1e3"/><rect x="1677" y="850" width="16" height="16" fill="#d4d4d6"/><rect x="1693" y="850" width="16" height="16" fill="#d6d6d8"/><rect x="1709" y="850" width="16" height="16" fill="#f6f6f8"/><rect x="1901" y="850" width="16" height="16" fill="#e2e2e4"/><rect x="1917" y="850" width="16" height="16" fill="#e5e5e7"/><rect x="1933" y="850" width="16" height="16" fill="#d7d7d9"/><rect x="1949" y="850" width="16" height="16" fill="#e2e2e4"/><rect x="1965" y="850" width="16" height="16" fill="#dcdcde"/><rect x="1981" y="850" width="16" height="16" fill="#dddddf"/><rect x="1997" y="850" width="16" height="16" fill="#e3e3e5"/><rect x="2189" y="850" width="16" height="16" fill="#f7f7f9"/><rect x="2205" y="850" width="16" height="16" fill="#d6d6d8"/><rect x="2221" y="850" width="16" height="16" fill="#e6e6e8"/><rect x="653" y="898" width="16" height="16" fill="#fafafc"/><rect x="669" y="898" width="16" height="16" fill="#f0f0f2"/><rect x="685" y="898" width="16" height="16" fill="#f5f5f7"/><rect x="701" y="898" width="16" height="16" fill="#f2f2f4"/><rect x="717" y="898" width="16" height="16" fill="#f1f1f3"/><rect x="733" y="898" width="16" height="16" fill="#f1f1f3"/><rect x="749" y="898" width="16" height="16" fill="#fefeff"/><rect x="1053" y="898" width="16" height="16" fill="#efeff1"/><rect x="1069" y="898" width="16" height="16" fill="#f5f5f7"/><rect x="1085" y="898" width="16" height="16" fill="#f2f2f4"/><rect x="1101" y="898" width="16" height="16" fill="#f6f6f8"/><rect x="1117" y="898" width="16" height="16" fill="#f0f0f2"/><rect x="1133" y="898" width="16" height="16" fill="#f2f2f4"/><rect x="1149" y="898" width="16" height="16" fill="#fdfdff"/><rect x="1165" y="898" width="16" height="16" fill="#f2f2f4"/><rect x="1181" y="898" width="16" height="16" fill="#f3f3f5"/><rect x="1197" y="898" width="16" height="16" fill="#f0f0f2"/><rect x="1213" y="898" width="16" height="16" fill="#f5f5f7"/><rect x="1229" y="898" width="16" height="16" fill="#f1f1f3"/><rect x="1245" y="898" width="16" height="16" fill="#f2f2f4"/><rect x="1261" y="898" width="16" height="16" fill="#fefeff"/><rect x="1613" y="898" width="16" height="16" fill="#f3f3f5"/><rect x="1629" y="898" width="16" height="16" fill="#f6f6f8"/><rect x="1645" y="898" width="16" height="16" fill="#f3f3f5"/><rect x="1661" y="898" width="16" height="16" fill="#f5f5f7"/><rect x="1677" y="898" width="16" height="16" fill="#f1f1f3"/><rect x="1693" y="898" width="16" height="16" fill="#f1f1f3"/><rect x="1709" y="898" width="16" height="16" fill="#fdfdff"/><rect x="1901" y="898" width="16" height="16" fill="#f4f4f6"/><rect x="1917" y="898" width="16" height="16" fill="#f5f5f7"/><rect x="1933" y="898" width="16" height="16" fill="#f2f2f4"/><rect x="1949" y="898" width="16" height="16" fill="#f4f4f6"/><rect x="1965" y="898" width="16" height="16" fill="#f3f3f5"/><rect x="1981" y="898" width="16" height="16" fill="#f2f2f4"/><rect x="1997" y="898" width="16" height="16" fill="#f4f4f6"/><rect x="2189" y="898" width="16" height="16" fill="#fefeff"/><rect x="2205" y="898" width="16" height="16" fill="#efeff1"/><rect x="2221" y="898" width="16" height="16" fill="#f5f5f7"/><rect x="653" y="914" width="16" height="16" fill="#f8f8fa"/><rect x="669" y="914" width="16" height="16" fill="#ececee"/><rect x="685" y="914" width="16" height="16" fill="#f1f1f3"/><rect x="701" y="914" width="16" height="16" fill="#eeeef0"/><rect x="717" y="914" width="16" height="16" fill="#ececee"/><rect x="733" y="914" width="16" height="16" fill="#ececee"/><rect x="749" y="914" width="16" height="16" fill="#fdfdff"/><rect x="1053" y="914" width="16" height="16" fill="#ebebed"/><rect x="1069" y="914" width="16" height="16" fill="#f3f3f5"/><rect x="1085" y="914" width="16" height="16" fill="#ededef"/><rect x="1101" y="914" width="16" height="16" fill="#f1f1f3"/><rect x="1117" y="914" width="16" height="16" fill="#eaeaec"/><rect x="1133" y="914" width="16" height="16" fill="#ececee"/><rect x="1149" y="914" width="16" height="16" fill="#fcfcfe"/><rect x="1165" y="914" width="16" height="16" fill="#ebebed"/><rect x="1181" y="914" width="16" height="16" fill="#efeff1"/><rect x="1197" y="914" width="16" height="16" fill="#ededef"/><rect x="1213" y="914" width="16" height="16" fill="#f3f3f5"/><rect x="1229" y="914" width="16" height="16" fill="#ececee"/><rect x="1245" y="914" width="16" height="16" fill="#ededef"/><rect x="1261" y="914" width="16" height="16" fill="#fdfdff"/><rect x="1613" y="914" width="16" height="16" fill="#f0f0f2"/><rect x="1629" y="914" width="16" height="16" fill="#f4f4f6"/><rect x="1645" y="914" width="16" height="16" fill="#efeff1"/><rect x="1661" y="914" width="16" height="16" fill="#f3f3f5"/><rect x="1677" y="914" width="16" height="16" fill="#ebebed"/><rect x="1693" y="914" width="16" height="16" fill="#eaeaec"/><rect x="1709" y="914" width="16" height="16" fill="#fcfcfe"/><rect x="1901" y="914" width="16" height="16" fill="#f2f2f4"/><rect x="1917" y="914" width="16" height="16" fill="#f1f1f3"/><rect x="1933" y="914" width="16" height="16" fill="#ebebed"/><rect x="1949" y="914" width="16" height="16" fill="#efeff1"/><rect x="1965" y="914" width="16" height="16" fill="#eeeef0"/><rect x="1981" y="914" width="16" height="16" fill="#efeff1"/><rect x="1997" y="914" width="16" height="16" fill="#f3f3f5"/><rect x="2189" y="914" width="16" height="16" fill="#fdfdff"/><rect x="2205" y="914" width="16" height="16" fill="#ececee"/><rect x="2221" y="914" width="16" height="16" fill="#f4f4f6"/><rect x="653" y="962" width="16" height="16" fill="#efeff1"/><rect x="669" y="962" width="16" height="16" fill="#d8d8da"/><rect x="685" y="962" width="16" height="16" fill="#dedee0"/><rect x="701" y="962" width="16" height="16" fill="#d9d9db"/><rect x="717" y="962" width="16" height="16" fill="#dbdbdd"/><rect x="733" y="962" width="16" height="16" fill="#dadadc"/><rect x="749" y="962" width="16" height="16" fill="#f8f8fa"/><rect x="1053" y="962" width="16" height="16" fill="#d8d8da"/><rect x="1069" y="962" width="16" height="16" fill="#e7e7e9"/><rect x="1085" y="962" width="16" height="16" fill="#d9d9db"/><rect x="1101" y="962" width="16" height="16" fill="#e2e2e4"/><rect x="1117" y="962" width="16" height="16" fill="#d8d8da"/><rect x="1133" y="962" width="16" height="16" fill="#dbdbdd"/><rect x="1149" y="962" width="16" height="16" fill="#f5f5f7"/><rect x="1165" y="962" width="16" height="16" fill="#dadadc"/><rect x="1181" y="962" width="16" height="16" fill="#e5e5e7"/><rect x="1197" y="962" width="16" height="16" fill="#dcdcde"/><rect x="1213" y="962" width="16" height="16" fill="#e6e6e8"/><rect x="1229" y="962" width="16" height="16" fill="#d8d8da"/><rect x="1245" y="962" width="16" height="16" fill="#d9d9db"/><rect x="1261" y="962" width="16" height="16" fill="#f7f7f9"/><rect x="1613" y="962" width="16" height="16" fill="#dedee0"/><rect x="1629" y="962" width="16" height="16" fill="#e5e5e7"/><rect x="1645" y="962" width="16" height="16" fill="#dbdbdd"/><rect x="1661" y="962" width="16" height="16" fill="#e4e4e6"/><rect x="1677" y="962" width="16" height="16" fill="#dbdbdd"/><rect x="1693" y="962" width="16" height="16" fill="#dbdbdd"/><rect x="1709" y="962" width="16" height="16" fill="#f6f6f8"/><rect x="1901" y="962" width="16" height="16" fill="#e6e6e8"/><rect x="1917" y="962" width="16" height="16" fill="#e3e3e5"/><rect x="1933" y="962" width="16" height="16" fill="#d9d9db"/><rect x="1949" y="962" width="16" height="16" fill="#e4e4e6"/><rect x="1965" y="962" width="16" height="16" fill="#dbdbdd"/><rect x="1981" y="962" width="16" height="16" fill="#dcdcde"/><rect x="1997" y="962" width="16" height="16" fill="#e3e3e5"/><rect x="2189" y="962" width="16" height="16" fill="#f7f7f9"/><rect x="2205" y="962" width="16" height="16" fill="#dadadc"/><rect x="2221" y="962" width="16" height="16" fill="#e5e5e7"/><rect x="653" y="978" width="16" height="16" fill="#f6f6f8"/><rect x="669" y="978" width="16" height="16" fill="#eeeef0"/><rect x="685" y="978" width="16" height="16" fill="#f2f2f4"/><rect x="701" y="978" width="16" height="16" fill="#ededef"/><rect x="717" y="978" width="16" height="16" fill="#eeeef0"/><rect x="733" y="978" width="16" height="16" fill="#eeeef0"/><rect x="749" y="978" width="16" height="16" fill="#f9f9fb"/><rect x="1053" y="978" width="16" height="16" fill="#ededef"/><rect x="1069" y="978" width="16" height="16" fill="#f2f2f4"/><rect x="1085" y="978" width="16" height="16" fill="#ededef"/><rect x="1101" y="978" width="16" height="16" fill="#f1f1f3"/><rect x="1117" y="978" width="16" height="16" fill="#eeeef0"/><rect x="1133" y="978" width="16" height="16" fill="#efeff1"/><rect x="1149" y="978" width="16" height="16" fill="#f8f8fa"/><rect x="1165" y="978" width="16" height="16" fill="#eeeef0"/><rect x="1181" y="978" width="16" height="16" fill="#f1f1f3"/><rect x="1197" y="978" width="16" height="16" fill="#efeff1"/><rect x="1213" y="978" width="16" height="16" fill="#f2f2f4"/><rect x="1229" y="978" width="16" height="16" fill="#eeeef0"/><rect x="1245" y="978" width="16" height="16" fill="#efeff1"/><rect x="1261" y="978" width="16" height="16" fill="#f9f9fb"/><rect x="1613" y="978" width="16" height="16" fill="#eeeef0"/><rect x="1629" y="978" width="16" height="16" fill="#f2f2f4"/><rect x="1645" y="978" width="16" height="16" fill="#efeff1"/><rect x="1661" y="978" width="16" height="16" fill="#f2f2f4"/><rect x="1677" y="978" width="16" height="16" fill="#ededef"/><rect x="1693" y="978" width="16" height="16" fill="#eeeef0"/><rect x="1709" y="978" width="16" height="16" fill="#f8f8fa"/><rect x="1901" y="978" width="16" height="16" fill="#f0f0f2"/><rect x="1917" y="978" width="16" height="16" fill="#f2f2f4"/><rect x="1933" y="978" width="16" height="16" fill="#eeeef0"/><rect x="1949" y="978" width="16" height="16" fill="#f1f1f3"/><rect x="1965" y="978" width="16" height="16" fill="#f0f0f2"/><rect x="1981" y="978" width="16" height="16" fill="#efeff1"/><rect x="1997" y="978" width="16" height="16" fill="#f2f2f4"/><rect x="2189" y="978" width="16" height="16" fill="#f9f9fb"/><rect x="2205" y="978" width="16" height="16" fill="#eeeef0"/><rect x="2221" y="978" width="16" height="16" fill="#f1f1f3"/><rect x="653" y="1026" width="16" height="16" fill="#f2f2f4"/><rect x="669" y="1026" width="16" height="16" fill="#d9d9db"/><rect x="685" y="1026" width="16" height="16" fill="#e2e2e4"/><rect x="701" y="1026" width="16" height="16" fill="#d9d9db"/><rect x="717" y="1026" width="16" height="16" fill="#dadadc"/><rect x="733" y="1026" width="16" height="16" fill="#dadadc"/><rect x="749" y="1026" width="16" height="16" fill="#fcfcfe"/><rect x="1053" y="1026" width="16" height="16" fill="#d9d9db"/><rect x="1069" y="1026" width="16" height="16" fill="#e5e5e7"/><rect x="1085" y="1026" width="16" height="16" fill="#d7d7d9"/><rect x="1101" y="1026" width="16" height="16" fill="#e9e9eb"/><rect x="1117" y="1026" width="16" height="16" fill="#d8d8da"/><rect x="1133" y="1026" width="16" height="16" fill="#dfdfe1"/><rect x="1149" y="1026" width="16" height="16" fill="#fafafc"/><rect x="1165" y="1026" width="16" height="16" fill="#dbdbdd"/><rect x="1181" y="1026" width="16" height="16" fill="#e0e0e2"/><rect x="1197" y="1026" width="16" height="16" fill="#dedee0"/><rect x="1213" y="1026" width="16" height="16" fill="#e5e5e7"/><rect x="1229" y="1026" width="16" height="16" fill="#d7d7d9"/><rect x="1245" y="1026" width="16" height="16" fill="#d8d8da"/><rect x="1261" y="1026" width="16" height="16" fill="#fcfcfe"/><rect x="1613" y="1026" width="16" height="16" fill="#dedee0"/><rect x="1629" y="1026" width="16" height="16" fill="#e5e5e7"/><rect x="1645" y="1026" width="16" height="16" fill="#dedee0"/><rect x="1661" y="1026" width="16" height="16" fill="#e7e7e9"/><rect x="1677" y="1026" width="16" height="16" fill="#d7d7d9"/><rect x="1693" y="1026" width="16" height="16" fill="#d9d9db"/><rect x="1709" y="1026" width="16" height="16" fill="#fafafc"/><rect x="1901" y="1026" width="16" height="16" fill="#e5e5e7"/><rect x="1917" y="1026" width="16" height="16" fill="#e7e7e9"/><rect x="1933" y="1026" width="16" height="16" fill="#d8d8da"/><rect x="1949" y="1026" width="16" height="16" fill="#e2e2e4"/><rect x="1965" y="1026" width="16" height="16" fill="#dadadc"/><rect x="1981" y="1026" width="16" height="16" fill="#dcdcde"/><rect x="1997" y="1026" width="16" height="16" fill="#e6e6e8"/><rect x="2189" y="1026" width="16" height="16" fill="#fcfcfe"/><rect x="2205" y="1026" width="16" height="16" fill="#d8d8da"/><rect x="2221" y="1026" width="16" height="16" fill="#e4e4e6"/><rect x="653" y="1090" width="16" height="16" fill="#ededef"/><rect x="669" y="1090" width="16" height="16" fill="#d1d1d3"/><rect x="685" y="1090" width="16" height="16" fill="#e0e0e2"/><rect x="701" y="1090" width="16" height="16" fill="#d8d8da"/><rect x="717" y="1090" width="16" height="16" fill="#d6d6d8"/><rect x="733" y="1090" width="16" height="16" fill="#d6d6d8"/><rect x="749" y="1090" width="16" height="16" fill="#f7f7f9"/><rect x="1053" y="1090" width="16" height="16" fill="#d7d7d9"/><rect x="1069" y="1090" width="16" height="16" fill="#e4e4e6"/><rect x="1085" y="1090" width="16" height="16" fill="#d3d3d5"/><rect x="1101" y="1090" width="16" height="16" fill="#dfdfe1"/><rect x="1117" y="1090" width="16" height="16" fill="#d1d1d3"/><rect x="1133" y="1090" width="16" height="16" fill="#dbdbdd"/><rect x="1149" y="1090" width="16" height="16" fill="#f5f5f7"/><rect x="1165" y="1090" width="16" height="16" fill="#d3d3d5"/><rect x="1181" y="1090" width="16" height="16" fill="#dcdcde"/><rect x="1197" y="1090" width="16" height="16" fill="#dcdcde"/><rect x="1213" y="1090" width="16" height="16" fill="#dedee0"/><rect x="1229" y="1090" width="16" height="16" fill="#d1d1d3"/><rect x="1245" y="1090" width="16" height="16" fill="#d7d7d9"/><rect x="1261" y="1090" width="16" height="16" fill="#f7f7f9"/><rect x="1613" y="1090" width="16" height="16" fill="#d5d5d7"/><rect x="1629" y="1090" width="16" height="16" fill="#e2e2e4"/><rect x="1645" y="1090" width="16" height="16" fill="#d9d9db"/><rect x="1661" y="1090" width="16" height="16" fill="#dfdfe1"/><rect x="1677" y="1090" width="16" height="16" fill="#d2d2d4"/><rect x="1693" y="1090" width="16" height="16" fill="#d6d6d8"/><rect x="1709" y="1090" width="16" height="16" fill="#f5f5f7"/><rect x="1901" y="1090" width="16" height="16" fill="#e0e0e2"/><rect x="1917" y="1090" width="16" height="16" fill="#e2e2e4"/><rect x="1933" y="1090" width="16" height="16" fill="#d7d7d9"/><rect x="1949" y="1090" width="16" height="16" fill="#e0e0e2"/><rect x="1965" y="1090" width="16" height="16" fill="#d9d9db"/><rect x="1981" y="1090" width="16" height="16" fill="#d8d8da"/><rect x="1997" y="1090" width="16" height="16" fill="#e3e3e5"/><rect x="2189" y="1090" width="16" height="16" fill="#f7f7f9"/><rect x="2205" y="1090" width="16" height="16" fill="#d3d3d5"/><rect x="2221" y="1090" width="16" height="16" fill="#e2e2e4"/><rect x="653" y="1138" width="16" height="16" fill="#fcfcfe"/><rect x="669" y="1138" width="16" height="16" fill="#f7f7f9"/><rect x="685" y="1138" width="16" height="16" fill="#f9f9fb"/><rect x="701" y="1138" width="16" height="16" fill="#f7f7f9"/><rect x="717" y="1138" width="16" height="16" fill="#f7f7f9"/><rect x="733" y="1138" width="16" height="16" fill="#f7f7f9"/><rect x="749" y="1138" width="16" height="16" fill="#fefeff"/><rect x="1053" y="1138" width="16" height="16" fill="#f6f6f8"/><rect x="1069" y="1138" width="16" height="16" fill="#f9f9fb"/><rect x="1085" y="1138" width="16" height="16" fill="#f6f6f8"/><rect x="1101" y="1138" width="16" height="16" fill="#fafafc"/><rect x="1117" y="1138" width="16" height="16" fill="#f7f7f9"/><rect x="1133" y="1138" width="16" height="16" fill="#f9f9fb"/><rect x="1149" y="1138" width="16" height="16" fill="#fefeff"/><rect x="1165" y="1138" width="16" height="16" fill="#f7f7f9"/><rect x="1181" y="1138" width="16" height="16" fill="#f9f9fb"/><rect x="1197" y="1138" width="16" height="16" fill="#f9f9fb"/><rect x="1213" y="1138" width="16" height="16" fill="#fafafc"/><rect x="1229" y="1138" width="16" height="16" fill="#f6f6f8"/><rect x="1245" y="1138" width="16" height="16" fill="#f7f7f9"/><rect x="1261" y="1138" width="16" height="16" fill="#fefeff"/><rect x="1613" y="1138" width="16" height="16" fill="#f8f8fa"/><rect x="1629" y="1138" width="16" height="16" fill="#fafafc"/><rect x="1645" y="1138" width="16" height="16" fill="#f7f7f9"/><rect x="1661" y="1138" width="16" height="16" fill="#fafafc"/><rect x="1677" y="1138" width="16" height="16" fill="#f7f7f9"/><rect x="1693" y="1138" width="16" height="16" fill="#f7f7f9"/><rect x="1709" y="1138" width="16" height="16" fill="#fefeff"/><rect x="1901" y="1138" width="16" height="16" fill="#fafafc"/><rect x="1917" y="1138" width="16" height="16" fill="#fafafc"/><rect x="1933" y="1138" width="16" height="16" fill="#f7f7f9"/><rect x="1949" y="1138" width="16" height="16" fill="#f9f9fb"/><rect x="1965" y="1138" width="16" height="16" fill="#f7f7f9"/><rect x="1981" y="1138" width="16" height="16" fill="#f8f8fa"/><rect x="1997" y="1138" width="16" height="16" fill="#f9f9fb"/><rect x="2189" y="1138" width="16" height="16" fill="#fefeff"/><rect x="2205" y="1138" width="16" height="16" fill="#f7f7f9"/><rect x="2221" y="1138" width="16" height="16" fill="#f9f9fb"/><rect x="653" y="1154" width="16" height="16" fill="#f3f3f5"/><rect x="669" y="1154" width="16" height="16" fill="#dddddf"/><rect x="685" y="1154" width="16" height="16" fill="#e2e2e4"/><rect x="701" y="1154" width="16" height="16" fill="#dedee0"/><rect x="717" y="1154" width="16" height="16" fill="#dfdfe1"/><rect x="733" y="1154" width="16" height="16" fill="#dddddf"/><rect x="749" y="1154" width="16" height="16" fill="#fdfdff"/><rect x="1053" y="1154" width="16" height="16" fill="#dadadc"/><rect x="1069" y="1154" width="16" height="16" fill="#eaeaec"/><rect x="1085" y="1154" width="16" height="16" fill="#e0e0e2"/><rect x="1101" y="1154" width="16" height="16" fill="#e8e8ea"/><rect x="1117" y="1154" width="16" height="16" fill="#dedee0"/><rect x="1133" y="1154" width="16" height="16" fill="#e4e4e6"/><rect x="1149" y="1154" width="16" height="16" fill="#fafafc"/><rect x="1165" y="1154" width="16" height="16" fill="#e0e0e2"/><rect x="1181" y="1154" width="16" height="16" fill="#eaeaec"/><rect x="1197" y="1154" width="16" height="16" fill="#e3e3e5"/><rect x="1213" y="1154" width="16" height="16" fill="#eaeaec"/><rect x="1229" y="1154" width="16" height="16" fill="#dfdfe1"/><rect x="1245" y="1154" width="16" height="16" fill="#dddddf"/><rect x="1261" y="1154" width="16" height="16" fill="#fcfcfe"/><rect x="1613" y="1154" width="16" height="16" fill="#e3e3e5"/><rect x="1629" y="1154" width="16" height="16" fill="#e8e8ea"/><rect x="1645" y="1154" width="16" height="16" fill="#e3e3e5"/><rect x="1661" y="1154" width="16" height="16" fill="#eaeaec"/><rect x="1677" y="1154" width="16" height="16" fill="#dfdfe1"/><rect x="1693" y="1154" width="16" height="16" fill="#dedee0"/><rect x="1709" y="1154" width="16" height="16" fill="#fbfbfd"/><rect x="1901" y="1154" width="16" height="16" fill="#eaeaec"/><rect x="1917" y="1154" width="16" height="16" fill="#e8e8ea"/><rect x="1933" y="1154" width="16" height="16" fill="#dedee0"/><rect x="1949" y="1154" width="16" height="16" fill="#e7e7e9"/><rect x="1965" y="1154" width="16" height="16" fill="#e0e0e2"/><rect x="1981" y="1154" width="16" height="16" fill="#dfdfe1"/><rect x="1997" y="1154" width="16" height="16" fill="#eaeaec"/><rect x="2189" y="1154" width="16" height="16" fill="#fcfcfe"/><rect x="2205" y="1154" width="16" height="16" fill="#dbdbdd"/><rect x="2221" y="1154" width="16" height="16" fill="#eaeaec"/><rect x="653" y="1202" width="16" height="16" fill="#f3f3f5"/><rect x="669" y="1202" width="16" height="16" fill="#e4e4e6"/><rect x="685" y="1202" width="16" height="16" fill="#e8e8ea"/><rect x="701" y="1202" width="16" height="16" fill="#e6e6e8"/><rect x="717" y="1202" width="16" height="16" fill="#e5e5e7"/><rect x="733" y="1202" width="16" height="16" fill="#e4e4e6"/><rect x="749" y="1202" width="16" height="16" fill="#f8f8fa"/><rect x="1053" y="1202" width="16" height="16" fill="#e3e3e5"/><rect x="1069" y="1202" width="16" height="16" fill="#ececee"/><rect x="1085" y="1202" width="16" height="16" fill="#e3e3e5"/><rect x="1101" y="1202" width="16" height="16" fill="#ebebed"/><rect x="1117" y="1202" width="16" height="16" fill="#e4e4e6"/><rect x="1133" y="1202" width="16" height="16" fill="#e7e7e9"/><rect x="1149" y="1202" width="16" height="16" fill="#f7f7f9"/><rect x="1165" y="1202" width="16" height="16" fill="#e6e6e8"/><rect x="1181" y="1202" width="16" height="16" fill="#ededef"/><rect x="1197" y="1202" width="16" height="16" fill="#e9e9eb"/><rect x="1213" y="1202" width="16" height="16" fill="#eeeef0"/><rect x="1229" y="1202" width="16" height="16" fill="#e4e4e6"/><rect x="1245" y="1202" width="16" height="16" fill="#e6e6e8"/><rect x="1261" y="1202" width="16" height="16" fill="#f8f8fa"/><rect x="1613" y="1202" width="16" height="16" fill="#e9e9eb"/><rect x="1629" y="1202" width="16" height="16" fill="#eeeef0"/><rect x="1645" y="1202" width="16" height="16" fill="#e6e6e8"/><rect x="1661" y="1202" width="16" height="16" fill="#ebebed"/><rect x="1677" y="1202" width="16" height="16" fill="#e4e4e6"/><rect x="1693" y="1202" width="16" height="16" fill="#e5e5e7"/><rect x="1709" y="1202" width="16" height="16" fill="#f7f7f9"/><rect x="1901" y="1202" width="16" height="16" fill="#ececee"/><rect x="1917" y="1202" width="16" height="16" fill="#ededef"/><rect x="1933" y="1202" width="16" height="16" fill="#e6e6e8"/><rect x="1949" y="1202" width="16" height="16" fill="#ebebed"/><rect x="1965" y="1202" width="16" height="16" fill="#e7e7e9"/><rect x="1981" y="1202" width="16" height="16" fill="#e9e9eb"/><rect x="1997" y="1202" width="16" height="16" fill="#eaeaec"/><rect x="2189" y="1202" width="16" height="16" fill="#f8f8fa"/><rect x="2205" y="1202" width="16" height="16" fill="#e3e3e5"/><rect x="2221" y="1202" width="16" height="16" fill="#ececee"/><rect x="653" y="1218" width="16" height="16" fill="#f5f5f7"/><rect x="669" y="1218" width="16" height="16" fill="#ebebed"/><rect x="685" y="1218" width="16" height="16" fill="#ededef"/><rect x="701" y="1218" width="16" height="16" fill="#ececee"/><rect x="717" y="1218" width="16" height="16" fill="#ececee"/><rect x="733" y="1218" width="16" height="16" fill="#ececee"/><rect x="749" y="1218" width="16" height="16" fill="#f9f9fb"/><rect x="1053" y="1218" width="16" height="16" fill="#ececee"/><rect x="1069" y="1218" width="16" height="16" fill="#f0f0f2"/><rect x="1085" y="1218" width="16" height="16" fill="#ebebed"/><rect x="1101" y="1218" width="16" height="16" fill="#f1f1f3"/><rect x="1117" y="1218" width="16" height="16" fill="#ebebed"/><rect x="1133" y="1218" width="16" height="16" fill="#efeff1"/><rect x="1149" y="1218" width="16" height="16" fill="#f8f8fa"/><rect x="1165" y="1218" width="16" height="16" fill="#ececee"/><rect x="1181" y="1218" width="16" height="16" fill="#f1f1f3"/><rect x="1197" y="1218" width="16" height="16" fill="#ededef"/><rect x="1213" y="1218" width="16" height="16" fill="#f2f2f4"/><rect x="1229" y="1218" width="16" height="16" fill="#ededef"/><rect x="1245" y="1218" width="16" height="16" fill="#ececee"/><rect x="1261" y="1218" width="16" height="16" fill="#f9f9fb"/><rect x="1613" y="1218" width="16" height="16" fill="#eeeef0"/><rect x="1629" y="1218" width="16" height="16" fill="#f0f0f2"/><rect x="1645" y="1218" width="16" height="16" fill="#ededef"/><rect x="1661" y="1218" width="16" height="16" fill="#f0f0f2"/><rect x="1677" y="1218" width="16" height="16" fill="#ebebed"/><rect x="1693" y="1218" width="16" height="16" fill="#ebebed"/><rect x="1709" y="1218" width="16" height="16" fill="#f8f8fa"/><rect x="1901" y="1218" width="16" height="16" fill="#efeff1"/><rect x="1917" y="1218" width="16" height="16" fill="#f1f1f3"/><rect x="1933" y="1218" width="16" height="16" fill="#ececee"/><rect x="1949" y="1218" width="16" height="16" fill="#eeeef0"/><rect x="1965" y="1218" width="16" height="16" fill="#ededef"/><rect x="1981" y="1218" width="16" height="16" fill="#ededef"/><rect x="1997" y="1218" width="16" height="16" fill="#efeff1"/><rect x="2189" y="1218" width="16" height="16" fill="#f9f9fb"/><rect x="2205" y="1218" width="16" height="16" fill="#ececee"/><rect x="2221" y="1218" width="16" height="16" fill="#f0f0f2"/><rect x="653" y="1266" width="16" height="16" fill="#f5f5f7"/><rect x="669" y="1266" width="16" height="16" fill="#dedee0"/><rect x="685" y="1266" width="16" height="16" fill="#e7e7e9"/><rect x="701" y="1266" width="16" height="16" fill="#e1e1e3"/><rect x="717" y="1266" width="16" height="16" fill="#e0e0e2"/><rect x="733" y="1266" width="16" height="16" fill="#e2e2e4"/><rect x="749" y="1266" width="16" height="16" fill="#fdfdff"/><rect x="1053" y="1266" width="16" height="16" fill="#e1e1e3"/><rect x="1069" y="1266" width="16" height="16" fill="#ebebed"/><rect x="1085" y="1266" width="16" height="16" fill="#dfdfe1"/><rect x="1101" y="1266" width="16" height="16" fill="#e9e9eb"/><rect x="1117" y="1266" width="16" height="16" fill="#dfdfe1"/><rect x="1133" y="1266" width="16" height="16" fill="#e3e3e5"/><rect x="1149" y="1266" width="16" height="16" fill="#fbfbfd"/><rect x="1165" y="1266" width="16" height="16" fill="#dedee0"/><rect x="1181" y="1266" width="16" height="16" fill="#e7e7e9"/><rect x="1197" y="1266" width="16" height="16" fill="#e3e3e5"/><rect x="1213" y="1266" width="16" height="16" fill="#ededef"/><rect x="1229" y="1266" width="16" height="16" fill="#e4e4e6"/><rect x="1245" y="1266" width="16" height="16" fill="#e4e4e6"/><rect x="1261" y="1266" width="16" height="16" fill="#fdfdff"/><rect x="1613" y="1266" width="16" height="16" fill="#e5e5e7"/><rect x="1629" y="1266" width="16" height="16" fill="#ededef"/><rect x="1645" y="1266" width="16" height="16" fill="#e2e2e4"/><rect x="1661" y="1266" width="16" height="16" fill="#ebebed"/><rect x="1677" y="1266" width="16" height="16" fill="#e0e0e2"/><rect x="1693" y="1266" width="16" height="16" fill="#e0e0e2"/><rect x="1709" y="1266" width="16" height="16" fill="#fbfbfd"/><rect x="1901" y="1266" width="16" height="16" fill="#e9e9eb"/><rect x="1917" y="1266" width="16" height="16" fill="#ececee"/><rect x="1933" y="1266" width="16" height="16" fill="#e4e4e6"/><rect x="1949" y="1266" width="16" height="16" fill="#e7e7e9"/><rect x="1965" y="1266" width="16" height="16" fill="#e2e2e4"/><rect x="1981" y="1266" width="16" height="16" fill="#e5e5e7"/><rect x="1997" y="1266" width="16" height="16" fill="#eaeaec"/><rect x="2189" y="1266" width="16" height="16" fill="#fdfdff"/><rect x="2205" y="1266" width="16" height="16" fill="#dfdfe1"/><rect x="2221" y="1266" width="16" height="16" fill="#eeeef0"/><rect x="653" y="1282" width="16" height="16" fill="#fcfcfe"/><rect x="669" y="1282" width="16" height="16" fill="#f6f6f8"/><rect x="685" y="1282" width="16" height="16" fill="#f9f9fb"/><rect x="701" y="1282" width="16" height="16" fill="#f7f7f9"/><rect x="717" y="1282" width="16" height="16" fill="#f7f7f9"/><rect x="733" y="1282" width="16" height="16" fill="#f6f6f8"/><rect x="749" y="1282" width="16" height="16" fill="#fefeff"/><rect x="1053" y="1282" width="16" height="16" fill="#f7f7f9"/><rect x="1069" y="1282" width="16" height="16" fill="#f9f9fb"/><rect x="1085" y="1282" width="16" height="16" fill="#f6f6f8"/><rect x="1101" y="1282" width="16" height="16" fill="#f9f9fb"/><rect x="1117" y="1282" width="16" height="16" fill="#f6f6f8"/><rect x="1133" y="1282" width="16" height="16" fill="#f7f7f9"/><rect x="1149" y="1282" width="16" height="16" fill="#fdfdff"/><rect x="1165" y="1282" width="16" height="16" fill="#f6f6f8"/><rect x="1181" y="1282" width="16" height="16" fill="#f8f8fa"/><rect x="1197" y="1282" width="16" height="16" fill="#f7f7f9"/><rect x="1213" y="1282" width="16" height="16" fill="#f9f9fb"/><rect x="1229" y="1282" width="16" height="16" fill="#f7f7f9"/><rect x="1245" y="1282" width="16" height="16" fill="#f7f7f9"/><rect x="1261" y="1282" width="16" height="16" fill="#fefeff"/><rect x="1613" y="1282" width="16" height="16" fill="#f8f8fa"/><rect x="1629" y="1282" width="16" height="16" fill="#f9f9fb"/><rect x="1645" y="1282" width="16" height="16" fill="#f8f8fa"/><rect x="1661" y="1282" width="16" height="16" fill="#f9f9fb"/><rect x="1677" y="1282" width="16" height="16" fill="#f7f7f9"/><rect x="1693" y="1282" width="16" height="16" fill="#f7f7f9"/><rect x="1709" y="1282" width="16" height="16" fill="#fefeff"/><rect x="1901" y="1282" width="16" height="16" fill="#f9f9fb"/><rect x="1917" y="1282" width="16" height="16" fill="#f9f9fb"/><rect x="1933" y="1282" width="16" height="16" fill="#f6f6f8"/><rect x="1949" y="1282" width="16" height="16" fill="#f8f8fa"/><rect x="1965" y="1282" width="16" height="16" fill="#f7f7f9"/><rect x="1981" y="1282" width="16" height="16" fill="#f7f7f9"/><rect x="1997" y="1282" width="16" height="16" fill="#f9f9fb"/><rect x="2189" y="1282" width="16" height="16" fill="#fefeff"/><rect x="2205" y="1282" width="16" height="16" fill="#f6f6f8"/><rect x="2221" y="1282" width="16" height="16" fill="#fafafc"/></svg>
<div class="t " style="top:1324.41px;font-size:17px;left:380.5px;color:#878a99;word-spacing:.75px;">Showing <b>1 - 10</b> of <b>167</b> Results</div>
<div class="pg" style="left:2472.2px;width:101.3px;"><div class="t " style="top:12.91px;font-size:17px;left:15.699999999999996px;color:#878a99;letter-spacing:0.251px;">Previous</div></div>
<div class="pg" style="left:2582.4px;width:43.4px;background:#1f626b;border-color:#1f626b;"><div class="t " style="top:12.91px;font-size:17px;left:15.9725390625px;color:#fff;">1</div></div>
<div class="pg" style="left:2633.4px;width:43.4px;"><div class="t " style="top:12.91px;font-size:17px;left:15.9725390625px;color:#1f626b;">2</div></div>
<div class="pg" style="left:2684.3px;width:48.5px;"><div class="t " style="top:12.91px;font-size:17px;left:16.165781250000002px;color:#878a99;">...</div></div>
<div class="pg" style="left:2740.2px;width:52.6px;"><div class="t " style="top:12.91px;font-size:17px;left:15.845078125px;color:#1f626b;">17</div></div>
<div class="pg" style="left:2801.4px;width:68.3px;"><div class="t " style="top:12.91px;font-size:17px;left:15.6725390625px;color:#1f626b;">Next</div></div>
</body></html>
